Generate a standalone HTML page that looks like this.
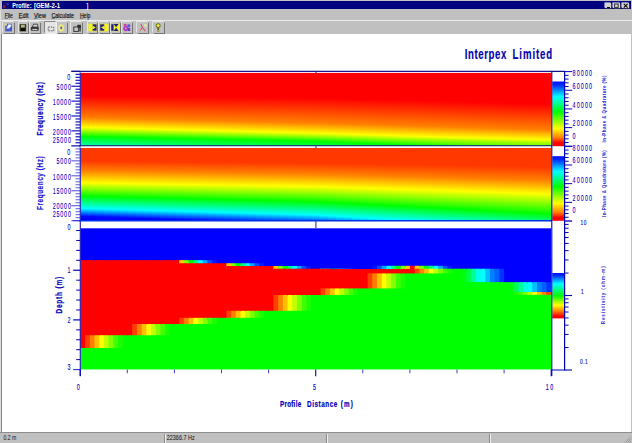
<!DOCTYPE html>
<html><head><meta charset="utf-8"><title>Profile: [GEM-2-1]</title>
<style>
html,body{margin:0;padding:0}
body{width:632px;height:443px;overflow:hidden;background:#c0c0c0;position:relative;font-family:"Liberation Sans",sans-serif}
.abs{position:absolute}
#title{left:1.9px;top:1.3px;width:628.8px;height:8.2px;background:#000080}
#content{left:2.2px;top:34px;width:628.5px;height:398.3px;background:#fff}
#lb{left:1.3px;top:34px;width:1px;height:399px;background:#868686}
#menuline1{left:0;top:19.5px;width:632px;height:.9px;background:#9a9a9a}
#menuline2{left:0;top:20.4px;width:632px;height:.8px;background:#ececec}
#sbtop{left:0;top:432.3px;width:632px;height:1px;background:#8e8e8e}
.tb{position:absolute;top:21.6px;height:11.2px;background:#c0c0c0;box-shadow:-.7px -.7px 0 #f4f4f4, .9px .9px 0 #6c6c6c}
.cap{position:absolute;top:2.6px;height:5.8px;background:#d0d0d0;box-shadow:-.5px -.5px 0 #fff,.6px .6px 0 #505050}
.sep{position:absolute;top:433.5px;width:1px;height:9px;background:#f0f0f0;box-shadow:-1px 0 0 #8a8a8a}
</style></head><body>
<div id="title" class="abs"></div>
<div class="cap" style="left:605.2px;width:6.3px"></div>
<div class="cap" style="left:613px;width:6.6px"></div>
<div class="cap" style="left:621.9px;width:7.4px"></div>
<div id="menuline1" class="abs"></div><div id="menuline2" class="abs"></div>
<div class="tb" style="left:3.2px;width:10.6px"></div>
<div class="tb" style="left:19px;width:9px"></div>
<div class="tb" style="left:29.6px;width:10.4px"></div>
<div class="tb" style="left:44.8px;width:11px;background:#e6e6e6;box-shadow:-.7px -.7px 0 #6c6c6c,.9px .9px 0 #f4f4f4"></div>
<div class="tb" style="left:56.6px;width:10.2px"></div>
<div class="tb" style="left:70.8px;width:11.4px"></div>
<div class="tb" style="left:87.8px;width:9.4px"></div>
<div class="tb" style="left:99.4px;width:9.2px"></div>
<div class="tb" style="left:110.8px;width:9.6px"></div>
<div class="tb" style="left:122.2px;width:9.8px"></div>
<div class="tb" style="left:137.4px;width:10.8px"></div>
<div class="tb" style="left:153px;width:10.8px"></div>
<div id="content" class="abs"></div>
<div id="lb" class="abs"></div><div class="abs" style="left:0;top:10px;width:1.2px;height:423px;background:#dedede"></div>
<div id="sbtop" class="abs"></div>
<div class="sep" style="left:164.5px"></div>
<div class="sep" style="left:327.3px"></div>
<div class="sep" style="left:490px"></div>
<svg width="632" height="443" viewBox="0 0 632 443" style="position:absolute;left:0;top:0" font-family="Liberation Sans, sans-serif"><defs><linearGradient id="a0" gradientUnits="userSpaceOnUse" x1="0" x2="0" y1="96.04" y2="149.70"><stop offset="0.0000" stop-color="#ff0000"/><stop offset="0.4019" stop-color="#ff8000"/><stop offset="0.5847" stop-color="#ffff00"/><stop offset="0.6535" stop-color="#99ff00"/><stop offset="0.7557" stop-color="#00ff00"/><stop offset="1.0000" stop-color="#00ffff"/></linearGradient><linearGradient id="a1" gradientUnits="userSpaceOnUse" x1="0" x2="0" y1="96.10" y2="150.05"><stop offset="0.0000" stop-color="#ff0000"/><stop offset="0.4020" stop-color="#ff8000"/><stop offset="0.5840" stop-color="#ffff00"/><stop offset="0.6523" stop-color="#99ff00"/><stop offset="0.7534" stop-color="#00ff00"/><stop offset="1.0000" stop-color="#00ffff"/></linearGradient><linearGradient id="a2" gradientUnits="userSpaceOnUse" x1="0" x2="0" y1="96.17" y2="150.41"><stop offset="0.0000" stop-color="#ff0000"/><stop offset="0.4020" stop-color="#ff8000"/><stop offset="0.5833" stop-color="#ffff00"/><stop offset="0.6511" stop-color="#99ff00"/><stop offset="0.7511" stop-color="#00ff00"/><stop offset="1.0000" stop-color="#00ffff"/></linearGradient><linearGradient id="a3" gradientUnits="userSpaceOnUse" x1="0" x2="0" y1="96.24" y2="150.76"><stop offset="0.0000" stop-color="#ff0000"/><stop offset="0.4021" stop-color="#ff8000"/><stop offset="0.5827" stop-color="#ffff00"/><stop offset="0.6499" stop-color="#99ff00"/><stop offset="0.7488" stop-color="#00ff00"/><stop offset="1.0000" stop-color="#00ffff"/></linearGradient><linearGradient id="a4" gradientUnits="userSpaceOnUse" x1="0" x2="0" y1="96.31" y2="151.12"><stop offset="0.0000" stop-color="#ff0000"/><stop offset="0.4021" stop-color="#ff8000"/><stop offset="0.5820" stop-color="#ffff00"/><stop offset="0.6487" stop-color="#99ff00"/><stop offset="0.7465" stop-color="#00ff00"/><stop offset="1.0000" stop-color="#00ffff"/></linearGradient><linearGradient id="a5" gradientUnits="userSpaceOnUse" x1="0" x2="0" y1="96.38" y2="151.47"><stop offset="0.0000" stop-color="#ff0000"/><stop offset="0.4022" stop-color="#ff8000"/><stop offset="0.5814" stop-color="#ffff00"/><stop offset="0.6475" stop-color="#99ff00"/><stop offset="0.7443" stop-color="#00ff00"/><stop offset="1.0000" stop-color="#00ffff"/></linearGradient><linearGradient id="a6" gradientUnits="userSpaceOnUse" x1="0" x2="0" y1="96.44" y2="151.83"><stop offset="0.0000" stop-color="#ff0000"/><stop offset="0.4022" stop-color="#ff8000"/><stop offset="0.5808" stop-color="#ffff00"/><stop offset="0.6464" stop-color="#99ff00"/><stop offset="0.7421" stop-color="#00ff00"/><stop offset="1.0000" stop-color="#00ffff"/></linearGradient><linearGradient id="a7" gradientUnits="userSpaceOnUse" x1="0" x2="0" y1="96.51" y2="152.18"><stop offset="0.0000" stop-color="#ff0000"/><stop offset="0.4023" stop-color="#ff8000"/><stop offset="0.5801" stop-color="#ffff00"/><stop offset="0.6452" stop-color="#99ff00"/><stop offset="0.7399" stop-color="#00ff00"/><stop offset="1.0000" stop-color="#00ffff"/></linearGradient><linearGradient id="a8" gradientUnits="userSpaceOnUse" x1="0" x2="0" y1="96.58" y2="152.54"><stop offset="0.0000" stop-color="#ff0000"/><stop offset="0.4023" stop-color="#ff8000"/><stop offset="0.5795" stop-color="#ffff00"/><stop offset="0.6441" stop-color="#99ff00"/><stop offset="0.7377" stop-color="#00ff00"/><stop offset="1.0000" stop-color="#00ffff"/></linearGradient><linearGradient id="a9" gradientUnits="userSpaceOnUse" x1="0" x2="0" y1="96.65" y2="152.89"><stop offset="0.0000" stop-color="#ff0000"/><stop offset="0.4024" stop-color="#ff8000"/><stop offset="0.5789" stop-color="#ffff00"/><stop offset="0.6429" stop-color="#99ff00"/><stop offset="0.7356" stop-color="#00ff00"/><stop offset="1.0000" stop-color="#00ffff"/></linearGradient><linearGradient id="a10" gradientUnits="userSpaceOnUse" x1="0" x2="0" y1="96.71" y2="153.25"><stop offset="0.0000" stop-color="#ff0000"/><stop offset="0.4024" stop-color="#ff8000"/><stop offset="0.5783" stop-color="#ffff00"/><stop offset="0.6418" stop-color="#99ff00"/><stop offset="0.7334" stop-color="#00ff00"/><stop offset="1.0000" stop-color="#00ffff"/></linearGradient><linearGradient id="a11" gradientUnits="userSpaceOnUse" x1="0" x2="0" y1="96.78" y2="153.60"><stop offset="0.0000" stop-color="#ff0000"/><stop offset="0.4024" stop-color="#ff8000"/><stop offset="0.5777" stop-color="#ffff00"/><stop offset="0.6407" stop-color="#99ff00"/><stop offset="0.7313" stop-color="#00ff00"/><stop offset="1.0000" stop-color="#00ffff"/></linearGradient><linearGradient id="a12" gradientUnits="userSpaceOnUse" x1="0" x2="0" y1="96.85" y2="153.96"><stop offset="0.0000" stop-color="#ff0000"/><stop offset="0.4025" stop-color="#ff8000"/><stop offset="0.5771" stop-color="#ffff00"/><stop offset="0.6396" stop-color="#99ff00"/><stop offset="0.7293" stop-color="#00ff00"/><stop offset="1.0000" stop-color="#00ffff"/></linearGradient><linearGradient id="a13" gradientUnits="userSpaceOnUse" x1="0" x2="0" y1="96.92" y2="154.31"><stop offset="0.0000" stop-color="#ff0000"/><stop offset="0.4025" stop-color="#ff8000"/><stop offset="0.5765" stop-color="#ffff00"/><stop offset="0.6386" stop-color="#99ff00"/><stop offset="0.7272" stop-color="#00ff00"/><stop offset="1.0000" stop-color="#00ffff"/></linearGradient><linearGradient id="a14" gradientUnits="userSpaceOnUse" x1="0" x2="0" y1="96.98" y2="154.67"><stop offset="0.0000" stop-color="#ff0000"/><stop offset="0.4026" stop-color="#ff8000"/><stop offset="0.5759" stop-color="#ffff00"/><stop offset="0.6375" stop-color="#99ff00"/><stop offset="0.7252" stop-color="#00ff00"/><stop offset="1.0000" stop-color="#00ffff"/></linearGradient><linearGradient id="a15" gradientUnits="userSpaceOnUse" x1="0" x2="0" y1="97.05" y2="155.02"><stop offset="0.0000" stop-color="#ff0000"/><stop offset="0.4026" stop-color="#ff8000"/><stop offset="0.5753" stop-color="#ffff00"/><stop offset="0.6364" stop-color="#99ff00"/><stop offset="0.7231" stop-color="#00ff00"/><stop offset="1.0000" stop-color="#00ffff"/></linearGradient><linearGradient id="a16" gradientUnits="userSpaceOnUse" x1="0" x2="0" y1="97.12" y2="155.38"><stop offset="0.0000" stop-color="#ff0000"/><stop offset="0.4027" stop-color="#ff8000"/><stop offset="0.5747" stop-color="#ffff00"/><stop offset="0.6354" stop-color="#99ff00"/><stop offset="0.7211" stop-color="#00ff00"/><stop offset="1.0000" stop-color="#00ffff"/></linearGradient><linearGradient id="a17" gradientUnits="userSpaceOnUse" x1="0" x2="0" y1="97.19" y2="155.73"><stop offset="0.0000" stop-color="#ff0000"/><stop offset="0.4027" stop-color="#ff8000"/><stop offset="0.5742" stop-color="#ffff00"/><stop offset="0.6343" stop-color="#99ff00"/><stop offset="0.7192" stop-color="#00ff00"/><stop offset="1.0000" stop-color="#00ffff"/></linearGradient><linearGradient id="a18" gradientUnits="userSpaceOnUse" x1="0" x2="0" y1="97.25" y2="156.09"><stop offset="0.0000" stop-color="#ff0000"/><stop offset="0.4028" stop-color="#ff8000"/><stop offset="0.5736" stop-color="#ffff00"/><stop offset="0.6333" stop-color="#99ff00"/><stop offset="0.7172" stop-color="#00ff00"/><stop offset="1.0000" stop-color="#00ffff"/></linearGradient><linearGradient id="a19" gradientUnits="userSpaceOnUse" x1="0" x2="0" y1="97.32" y2="156.44"><stop offset="0.0000" stop-color="#ff0000"/><stop offset="0.4028" stop-color="#ff8000"/><stop offset="0.5731" stop-color="#ffff00"/><stop offset="0.6323" stop-color="#99ff00"/><stop offset="0.7153" stop-color="#00ff00"/><stop offset="1.0000" stop-color="#00ffff"/></linearGradient><linearGradient id="a20" gradientUnits="userSpaceOnUse" x1="0" x2="0" y1="97.39" y2="156.80"><stop offset="0.0000" stop-color="#ff0000"/><stop offset="0.4029" stop-color="#ff8000"/><stop offset="0.5725" stop-color="#ffff00"/><stop offset="0.6313" stop-color="#99ff00"/><stop offset="0.7133" stop-color="#00ff00"/><stop offset="1.0000" stop-color="#00ffff"/></linearGradient><linearGradient id="a21" gradientUnits="userSpaceOnUse" x1="0" x2="0" y1="97.46" y2="157.15"><stop offset="0.0000" stop-color="#ff0000"/><stop offset="0.4029" stop-color="#ff8000"/><stop offset="0.5720" stop-color="#ffff00"/><stop offset="0.6303" stop-color="#99ff00"/><stop offset="0.7114" stop-color="#00ff00"/><stop offset="1.0000" stop-color="#00ffff"/></linearGradient><linearGradient id="a22" gradientUnits="userSpaceOnUse" x1="0" x2="0" y1="97.52" y2="157.51"><stop offset="0.0000" stop-color="#ff0000"/><stop offset="0.4029" stop-color="#ff8000"/><stop offset="0.5714" stop-color="#ffff00"/><stop offset="0.6293" stop-color="#99ff00"/><stop offset="0.7095" stop-color="#00ff00"/><stop offset="1.0000" stop-color="#00ffff"/></linearGradient><linearGradient id="a23" gradientUnits="userSpaceOnUse" x1="0" x2="0" y1="97.59" y2="157.86"><stop offset="0.0000" stop-color="#ff0000"/><stop offset="0.4030" stop-color="#ff8000"/><stop offset="0.5709" stop-color="#ffff00"/><stop offset="0.6283" stop-color="#99ff00"/><stop offset="0.7077" stop-color="#00ff00"/><stop offset="1.0000" stop-color="#00ffff"/></linearGradient><linearGradient id="a24" gradientUnits="userSpaceOnUse" x1="0" x2="0" y1="97.66" y2="158.22"><stop offset="0.0000" stop-color="#ff0000"/><stop offset="0.4030" stop-color="#ff8000"/><stop offset="0.5703" stop-color="#ffff00"/><stop offset="0.6273" stop-color="#99ff00"/><stop offset="0.7058" stop-color="#00ff00"/><stop offset="1.0000" stop-color="#00ffff"/></linearGradient><linearGradient id="a25" gradientUnits="userSpaceOnUse" x1="0" x2="0" y1="97.73" y2="158.57"><stop offset="0.0000" stop-color="#ff0000"/><stop offset="0.4031" stop-color="#ff8000"/><stop offset="0.5698" stop-color="#ffff00"/><stop offset="0.6264" stop-color="#99ff00"/><stop offset="0.7040" stop-color="#00ff00"/><stop offset="1.0000" stop-color="#00ffff"/></linearGradient><linearGradient id="a26" gradientUnits="userSpaceOnUse" x1="0" x2="0" y1="97.80" y2="158.93"><stop offset="0.0000" stop-color="#ff0000"/><stop offset="0.4031" stop-color="#ff8000"/><stop offset="0.5693" stop-color="#ffff00"/><stop offset="0.6254" stop-color="#99ff00"/><stop offset="0.7022" stop-color="#00ff00"/><stop offset="1.0000" stop-color="#00ffff"/></linearGradient><linearGradient id="a27" gradientUnits="userSpaceOnUse" x1="0" x2="0" y1="97.86" y2="159.28"><stop offset="0.0000" stop-color="#ff0000"/><stop offset="0.4031" stop-color="#ff8000"/><stop offset="0.5688" stop-color="#ffff00"/><stop offset="0.6245" stop-color="#99ff00"/><stop offset="0.7004" stop-color="#00ff00"/><stop offset="1.0000" stop-color="#00ffff"/></linearGradient><linearGradient id="a28" gradientUnits="userSpaceOnUse" x1="0" x2="0" y1="97.93" y2="159.64"><stop offset="0.0000" stop-color="#ff0000"/><stop offset="0.4032" stop-color="#ff8000"/><stop offset="0.5683" stop-color="#ffff00"/><stop offset="0.6235" stop-color="#99ff00"/><stop offset="0.6986" stop-color="#00ff00"/><stop offset="1.0000" stop-color="#00ffff"/></linearGradient><linearGradient id="a29" gradientUnits="userSpaceOnUse" x1="0" x2="0" y1="98.00" y2="159.99"><stop offset="0.0000" stop-color="#ff0000"/><stop offset="0.4032" stop-color="#ff8000"/><stop offset="0.5678" stop-color="#ffff00"/><stop offset="0.6226" stop-color="#99ff00"/><stop offset="0.6968" stop-color="#00ff00"/><stop offset="1.0000" stop-color="#00ffff"/></linearGradient><linearGradient id="a30" gradientUnits="userSpaceOnUse" x1="0" x2="0" y1="98.19" y2="160.65"><stop offset="0.0000" stop-color="#ff0000"/><stop offset="0.4008" stop-color="#ff8000"/><stop offset="0.5644" stop-color="#ffff00"/><stop offset="0.6188" stop-color="#99ff00"/><stop offset="0.6941" stop-color="#00ff00"/><stop offset="1.0000" stop-color="#00ffff"/></linearGradient><linearGradient id="a31" gradientUnits="userSpaceOnUse" x1="0" x2="0" y1="98.39" y2="161.31"><stop offset="0.0000" stop-color="#ff0000"/><stop offset="0.3984" stop-color="#ff8000"/><stop offset="0.5611" stop-color="#ffff00"/><stop offset="0.6149" stop-color="#99ff00"/><stop offset="0.6914" stop-color="#00ff00"/><stop offset="1.0000" stop-color="#00ffff"/></linearGradient><linearGradient id="a32" gradientUnits="userSpaceOnUse" x1="0" x2="0" y1="98.59" y2="161.98"><stop offset="0.0000" stop-color="#ff0000"/><stop offset="0.3960" stop-color="#ff8000"/><stop offset="0.5578" stop-color="#ffff00"/><stop offset="0.6112" stop-color="#99ff00"/><stop offset="0.6887" stop-color="#00ff00"/><stop offset="1.0000" stop-color="#00ffff"/></linearGradient><linearGradient id="a33" gradientUnits="userSpaceOnUse" x1="0" x2="0" y1="98.79" y2="162.64"><stop offset="0.0000" stop-color="#ff0000"/><stop offset="0.3936" stop-color="#ff8000"/><stop offset="0.5546" stop-color="#ffff00"/><stop offset="0.6074" stop-color="#99ff00"/><stop offset="0.6861" stop-color="#00ff00"/><stop offset="1.0000" stop-color="#00ffff"/></linearGradient><linearGradient id="a34" gradientUnits="userSpaceOnUse" x1="0" x2="0" y1="98.99" y2="163.31"><stop offset="0.0000" stop-color="#ff0000"/><stop offset="0.3913" stop-color="#ff8000"/><stop offset="0.5514" stop-color="#ffff00"/><stop offset="0.6038" stop-color="#99ff00"/><stop offset="0.6835" stop-color="#00ff00"/><stop offset="1.0000" stop-color="#00ffff"/></linearGradient><linearGradient id="a35" gradientUnits="userSpaceOnUse" x1="0" x2="0" y1="99.19" y2="163.97"><stop offset="0.0000" stop-color="#ff0000"/><stop offset="0.3890" stop-color="#ff8000"/><stop offset="0.5483" stop-color="#ffff00"/><stop offset="0.6001" stop-color="#99ff00"/><stop offset="0.6810" stop-color="#00ff00"/><stop offset="1.0000" stop-color="#00ffff"/></linearGradient><linearGradient id="a36" gradientUnits="userSpaceOnUse" x1="0" x2="0" y1="99.39" y2="164.64"><stop offset="0.0000" stop-color="#ff0000"/><stop offset="0.3867" stop-color="#ff8000"/><stop offset="0.5452" stop-color="#ffff00"/><stop offset="0.5966" stop-color="#99ff00"/><stop offset="0.6785" stop-color="#00ff00"/><stop offset="1.0000" stop-color="#00ffff"/></linearGradient><linearGradient id="a37" gradientUnits="userSpaceOnUse" x1="0" x2="0" y1="99.59" y2="165.30"><stop offset="0.0000" stop-color="#ff0000"/><stop offset="0.3845" stop-color="#ff8000"/><stop offset="0.5421" stop-color="#ffff00"/><stop offset="0.5931" stop-color="#99ff00"/><stop offset="0.6760" stop-color="#00ff00"/><stop offset="1.0000" stop-color="#00ffff"/></linearGradient><linearGradient id="a38" gradientUnits="userSpaceOnUse" x1="0" x2="0" y1="99.79" y2="165.97"><stop offset="0.0000" stop-color="#ff0000"/><stop offset="0.3823" stop-color="#ff8000"/><stop offset="0.5391" stop-color="#ffff00"/><stop offset="0.5896" stop-color="#99ff00"/><stop offset="0.6735" stop-color="#00ff00"/><stop offset="1.0000" stop-color="#00ffff"/></linearGradient><linearGradient id="a39" gradientUnits="userSpaceOnUse" x1="0" x2="0" y1="99.99" y2="166.63"><stop offset="0.0000" stop-color="#ff0000"/><stop offset="0.3801" stop-color="#ff8000"/><stop offset="0.5361" stop-color="#ffff00"/><stop offset="0.5862" stop-color="#99ff00"/><stop offset="0.6711" stop-color="#00ff00"/><stop offset="1.0000" stop-color="#00ffff"/></linearGradient><linearGradient id="a40" gradientUnits="userSpaceOnUse" x1="0" x2="0" y1="100.19" y2="167.30"><stop offset="0.0000" stop-color="#ff0000"/><stop offset="0.3780" stop-color="#ff8000"/><stop offset="0.5332" stop-color="#ffff00"/><stop offset="0.5828" stop-color="#99ff00"/><stop offset="0.6687" stop-color="#00ff00"/><stop offset="1.0000" stop-color="#00ffff"/></linearGradient><linearGradient id="a41" gradientUnits="userSpaceOnUse" x1="0" x2="0" y1="100.39" y2="167.96"><stop offset="0.0000" stop-color="#ff0000"/><stop offset="0.3759" stop-color="#ff8000"/><stop offset="0.5303" stop-color="#ffff00"/><stop offset="0.5795" stop-color="#99ff00"/><stop offset="0.6664" stop-color="#00ff00"/><stop offset="1.0000" stop-color="#00ffff"/></linearGradient><linearGradient id="a42" gradientUnits="userSpaceOnUse" x1="0" x2="0" y1="100.59" y2="168.63"><stop offset="0.0000" stop-color="#ff0000"/><stop offset="0.3738" stop-color="#ff8000"/><stop offset="0.5275" stop-color="#ffff00"/><stop offset="0.5762" stop-color="#99ff00"/><stop offset="0.6641" stop-color="#00ff00"/><stop offset="1.0000" stop-color="#00ffff"/></linearGradient><linearGradient id="a43" gradientUnits="userSpaceOnUse" x1="0" x2="0" y1="100.79" y2="169.29"><stop offset="0.0000" stop-color="#ff0000"/><stop offset="0.3717" stop-color="#ff8000"/><stop offset="0.5247" stop-color="#ffff00"/><stop offset="0.5730" stop-color="#99ff00"/><stop offset="0.6618" stop-color="#00ff00"/><stop offset="1.0000" stop-color="#00ffff"/></linearGradient><linearGradient id="a44" gradientUnits="userSpaceOnUse" x1="0" x2="0" y1="100.99" y2="169.96"><stop offset="0.0000" stop-color="#ff0000"/><stop offset="0.3697" stop-color="#ff8000"/><stop offset="0.5219" stop-color="#ffff00"/><stop offset="0.5698" stop-color="#99ff00"/><stop offset="0.6596" stop-color="#00ff00"/><stop offset="1.0000" stop-color="#00ffff"/></linearGradient><linearGradient id="a45" gradientUnits="userSpaceOnUse" x1="0" x2="0" y1="101.19" y2="170.65"><stop offset="0.0000" stop-color="#ff0000"/><stop offset="0.3676" stop-color="#ff8000"/><stop offset="0.5181" stop-color="#ffff00"/><stop offset="0.5660" stop-color="#99ff00"/><stop offset="0.6602" stop-color="#00ff00"/><stop offset="1.0000" stop-color="#00ffff"/></linearGradient><linearGradient id="a46" gradientUnits="userSpaceOnUse" x1="0" x2="0" y1="101.40" y2="171.34"><stop offset="0.0000" stop-color="#ff0000"/><stop offset="0.3656" stop-color="#ff8000"/><stop offset="0.5143" stop-color="#ffff00"/><stop offset="0.5623" stop-color="#99ff00"/><stop offset="0.6611" stop-color="#00ff00"/><stop offset="1.0000" stop-color="#00ffff"/></linearGradient><linearGradient id="a47" gradientUnits="userSpaceOnUse" x1="0" x2="0" y1="101.61" y2="172.04"><stop offset="0.0000" stop-color="#ff0000"/><stop offset="0.3635" stop-color="#ff8000"/><stop offset="0.5106" stop-color="#ffff00"/><stop offset="0.5586" stop-color="#99ff00"/><stop offset="0.6620" stop-color="#00ff00"/><stop offset="1.0000" stop-color="#00ffff"/></linearGradient><linearGradient id="a48" gradientUnits="userSpaceOnUse" x1="0" x2="0" y1="101.82" y2="172.73"><stop offset="0.0000" stop-color="#ff0000"/><stop offset="0.3615" stop-color="#ff8000"/><stop offset="0.5069" stop-color="#ffff00"/><stop offset="0.5550" stop-color="#99ff00"/><stop offset="0.6628" stop-color="#00ff00"/><stop offset="1.0000" stop-color="#00ffff"/></linearGradient><linearGradient id="a49" gradientUnits="userSpaceOnUse" x1="0" x2="0" y1="102.03" y2="173.43"><stop offset="0.0000" stop-color="#ff0000"/><stop offset="0.3596" stop-color="#ff8000"/><stop offset="0.5033" stop-color="#ffff00"/><stop offset="0.5514" stop-color="#99ff00"/><stop offset="0.6637" stop-color="#00ff00"/><stop offset="1.0000" stop-color="#00ffff"/></linearGradient><linearGradient id="a50" gradientUnits="userSpaceOnUse" x1="0" x2="0" y1="102.24" y2="174.12"><stop offset="0.0000" stop-color="#ff0000"/><stop offset="0.3576" stop-color="#ff8000"/><stop offset="0.4997" stop-color="#ffff00"/><stop offset="0.5479" stop-color="#99ff00"/><stop offset="0.6645" stop-color="#00ff00"/><stop offset="1.0000" stop-color="#00ffff"/></linearGradient><linearGradient id="a51" gradientUnits="userSpaceOnUse" x1="0" x2="0" y1="102.44" y2="174.81"><stop offset="0.0000" stop-color="#ff0000"/><stop offset="0.3557" stop-color="#ff8000"/><stop offset="0.4961" stop-color="#ffff00"/><stop offset="0.5444" stop-color="#99ff00"/><stop offset="0.6653" stop-color="#00ff00"/><stop offset="1.0000" stop-color="#00ffff"/></linearGradient><linearGradient id="a52" gradientUnits="userSpaceOnUse" x1="0" x2="0" y1="102.65" y2="175.51"><stop offset="0.0000" stop-color="#ff0000"/><stop offset="0.3538" stop-color="#ff8000"/><stop offset="0.4926" stop-color="#ffff00"/><stop offset="0.5409" stop-color="#99ff00"/><stop offset="0.6661" stop-color="#00ff00"/><stop offset="1.0000" stop-color="#00ffff"/></linearGradient><linearGradient id="a53" gradientUnits="userSpaceOnUse" x1="0" x2="0" y1="102.86" y2="176.20"><stop offset="0.0000" stop-color="#ff0000"/><stop offset="0.3519" stop-color="#ff8000"/><stop offset="0.4892" stop-color="#ffff00"/><stop offset="0.5375" stop-color="#99ff00"/><stop offset="0.6669" stop-color="#00ff00"/><stop offset="1.0000" stop-color="#00ffff"/></linearGradient><linearGradient id="a54" gradientUnits="userSpaceOnUse" x1="0" x2="0" y1="103.07" y2="176.89"><stop offset="0.0000" stop-color="#ff0000"/><stop offset="0.3501" stop-color="#ff8000"/><stop offset="0.4858" stop-color="#ffff00"/><stop offset="0.5342" stop-color="#99ff00"/><stop offset="0.6677" stop-color="#00ff00"/><stop offset="1.0000" stop-color="#00ffff"/></linearGradient><linearGradient id="a55" gradientUnits="userSpaceOnUse" x1="0" x2="0" y1="103.28" y2="177.59"><stop offset="0.0000" stop-color="#ff0000"/><stop offset="0.3483" stop-color="#ff8000"/><stop offset="0.4824" stop-color="#ffff00"/><stop offset="0.5309" stop-color="#99ff00"/><stop offset="0.6684" stop-color="#00ff00"/><stop offset="1.0000" stop-color="#00ffff"/></linearGradient><linearGradient id="a56" gradientUnits="userSpaceOnUse" x1="0" x2="0" y1="103.48" y2="178.28"><stop offset="0.0000" stop-color="#ff0000"/><stop offset="0.3465" stop-color="#ff8000"/><stop offset="0.4791" stop-color="#ffff00"/><stop offset="0.5276" stop-color="#99ff00"/><stop offset="0.6692" stop-color="#00ff00"/><stop offset="1.0000" stop-color="#00ffff"/></linearGradient><linearGradient id="a57" gradientUnits="userSpaceOnUse" x1="0" x2="0" y1="103.69" y2="178.98"><stop offset="0.0000" stop-color="#ff0000"/><stop offset="0.3447" stop-color="#ff8000"/><stop offset="0.4758" stop-color="#ffff00"/><stop offset="0.5244" stop-color="#99ff00"/><stop offset="0.6700" stop-color="#00ff00"/><stop offset="1.0000" stop-color="#00ffff"/></linearGradient><linearGradient id="a58" gradientUnits="userSpaceOnUse" x1="0" x2="0" y1="103.90" y2="179.67"><stop offset="0.0000" stop-color="#ff0000"/><stop offset="0.3429" stop-color="#ff8000"/><stop offset="0.4726" stop-color="#ffff00"/><stop offset="0.5212" stop-color="#99ff00"/><stop offset="0.6707" stop-color="#00ff00"/><stop offset="1.0000" stop-color="#00ffff"/></linearGradient><linearGradient id="b0" gradientUnits="userSpaceOnUse" x1="0" x2="0" y1="140.00" y2="230.19"><stop offset="0.0000" stop-color="#ff3800"/><stop offset="0.2333" stop-color="#ff3800"/><stop offset="0.3389" stop-color="#ff8000"/><stop offset="0.4754" stop-color="#ffff00"/><stop offset="0.6221" stop-color="#00ff00"/><stop offset="0.7598" stop-color="#00ffff"/><stop offset="0.8498" stop-color="#0000ff"/><stop offset="1.0000" stop-color="#0000ff"/></linearGradient><linearGradient id="b1" gradientUnits="userSpaceOnUse" x1="0" x2="0" y1="140.00" y2="230.52"><stop offset="0.0000" stop-color="#ff3800"/><stop offset="0.2331" stop-color="#ff3800"/><stop offset="0.3390" stop-color="#ff8000"/><stop offset="0.4750" stop-color="#ffff00"/><stop offset="0.6220" stop-color="#00ff00"/><stop offset="0.7594" stop-color="#00ffff"/><stop offset="0.8494" stop-color="#0000ff"/><stop offset="1.0000" stop-color="#0000ff"/></linearGradient><linearGradient id="b2" gradientUnits="userSpaceOnUse" x1="0" x2="0" y1="140.00" y2="230.86"><stop offset="0.0000" stop-color="#ff3800"/><stop offset="0.2330" stop-color="#ff3800"/><stop offset="0.3390" stop-color="#ff8000"/><stop offset="0.4746" stop-color="#ffff00"/><stop offset="0.6218" stop-color="#00ff00"/><stop offset="0.7591" stop-color="#00ffff"/><stop offset="0.8491" stop-color="#0000ff"/><stop offset="1.0000" stop-color="#0000ff"/></linearGradient><linearGradient id="b3" gradientUnits="userSpaceOnUse" x1="0" x2="0" y1="140.00" y2="231.20"><stop offset="0.0000" stop-color="#ff3800"/><stop offset="0.2329" stop-color="#ff3800"/><stop offset="0.3390" stop-color="#ff8000"/><stop offset="0.4743" stop-color="#ffff00"/><stop offset="0.6217" stop-color="#00ff00"/><stop offset="0.7587" stop-color="#00ffff"/><stop offset="0.8487" stop-color="#0000ff"/><stop offset="1.0000" stop-color="#0000ff"/></linearGradient><linearGradient id="b4" gradientUnits="userSpaceOnUse" x1="0" x2="0" y1="140.00" y2="231.54"><stop offset="0.0000" stop-color="#ff3800"/><stop offset="0.2328" stop-color="#ff3800"/><stop offset="0.3391" stop-color="#ff8000"/><stop offset="0.4739" stop-color="#ffff00"/><stop offset="0.6215" stop-color="#00ff00"/><stop offset="0.7583" stop-color="#00ffff"/><stop offset="0.8483" stop-color="#0000ff"/><stop offset="1.0000" stop-color="#0000ff"/></linearGradient><linearGradient id="b5" gradientUnits="userSpaceOnUse" x1="0" x2="0" y1="140.00" y2="231.88"><stop offset="0.0000" stop-color="#ff3800"/><stop offset="0.2327" stop-color="#ff3800"/><stop offset="0.3391" stop-color="#ff8000"/><stop offset="0.4736" stop-color="#ffff00"/><stop offset="0.6214" stop-color="#00ff00"/><stop offset="0.7580" stop-color="#00ffff"/><stop offset="0.8480" stop-color="#0000ff"/><stop offset="1.0000" stop-color="#0000ff"/></linearGradient><linearGradient id="b6" gradientUnits="userSpaceOnUse" x1="0" x2="0" y1="140.00" y2="232.21"><stop offset="0.0000" stop-color="#ff3800"/><stop offset="0.2325" stop-color="#ff3800"/><stop offset="0.3392" stop-color="#ff8000"/><stop offset="0.4733" stop-color="#ffff00"/><stop offset="0.6212" stop-color="#00ff00"/><stop offset="0.7576" stop-color="#00ffff"/><stop offset="0.8476" stop-color="#0000ff"/><stop offset="1.0000" stop-color="#0000ff"/></linearGradient><linearGradient id="b7" gradientUnits="userSpaceOnUse" x1="0" x2="0" y1="140.00" y2="232.55"><stop offset="0.0000" stop-color="#ff3800"/><stop offset="0.2324" stop-color="#ff3800"/><stop offset="0.3392" stop-color="#ff8000"/><stop offset="0.4729" stop-color="#ffff00"/><stop offset="0.6211" stop-color="#00ff00"/><stop offset="0.7572" stop-color="#00ffff"/><stop offset="0.8472" stop-color="#0000ff"/><stop offset="1.0000" stop-color="#0000ff"/></linearGradient><linearGradient id="b8" gradientUnits="userSpaceOnUse" x1="0" x2="0" y1="140.00" y2="232.89"><stop offset="0.0000" stop-color="#ff3800"/><stop offset="0.2323" stop-color="#ff3800"/><stop offset="0.3392" stop-color="#ff8000"/><stop offset="0.4726" stop-color="#ffff00"/><stop offset="0.6209" stop-color="#00ff00"/><stop offset="0.7569" stop-color="#00ffff"/><stop offset="0.8469" stop-color="#0000ff"/><stop offset="1.0000" stop-color="#0000ff"/></linearGradient><linearGradient id="b9" gradientUnits="userSpaceOnUse" x1="0" x2="0" y1="140.00" y2="233.23"><stop offset="0.0000" stop-color="#ff3800"/><stop offset="0.2322" stop-color="#ff3800"/><stop offset="0.3393" stop-color="#ff8000"/><stop offset="0.4722" stop-color="#ffff00"/><stop offset="0.6208" stop-color="#00ff00"/><stop offset="0.7565" stop-color="#00ffff"/><stop offset="0.8465" stop-color="#0000ff"/><stop offset="1.0000" stop-color="#0000ff"/></linearGradient><linearGradient id="b10" gradientUnits="userSpaceOnUse" x1="0" x2="0" y1="140.00" y2="233.57"><stop offset="0.0000" stop-color="#ff3800"/><stop offset="0.2321" stop-color="#ff3800"/><stop offset="0.3393" stop-color="#ff8000"/><stop offset="0.4719" stop-color="#ffff00"/><stop offset="0.6206" stop-color="#00ff00"/><stop offset="0.7562" stop-color="#00ffff"/><stop offset="0.8462" stop-color="#0000ff"/><stop offset="1.0000" stop-color="#0000ff"/></linearGradient><linearGradient id="b11" gradientUnits="userSpaceOnUse" x1="0" x2="0" y1="140.00" y2="233.91"><stop offset="0.0000" stop-color="#ff3800"/><stop offset="0.2319" stop-color="#ff3800"/><stop offset="0.3394" stop-color="#ff8000"/><stop offset="0.4716" stop-color="#ffff00"/><stop offset="0.6205" stop-color="#00ff00"/><stop offset="0.7558" stop-color="#00ffff"/><stop offset="0.8458" stop-color="#0000ff"/><stop offset="1.0000" stop-color="#0000ff"/></linearGradient><linearGradient id="b12" gradientUnits="userSpaceOnUse" x1="0" x2="0" y1="140.00" y2="234.24"><stop offset="0.0000" stop-color="#ff3800"/><stop offset="0.2318" stop-color="#ff3800"/><stop offset="0.3394" stop-color="#ff8000"/><stop offset="0.4713" stop-color="#ffff00"/><stop offset="0.6203" stop-color="#00ff00"/><stop offset="0.7555" stop-color="#00ffff"/><stop offset="0.8455" stop-color="#0000ff"/><stop offset="1.0000" stop-color="#0000ff"/></linearGradient><linearGradient id="b13" gradientUnits="userSpaceOnUse" x1="0" x2="0" y1="140.00" y2="234.58"><stop offset="0.0000" stop-color="#ff3800"/><stop offset="0.2317" stop-color="#ff3800"/><stop offset="0.3394" stop-color="#ff8000"/><stop offset="0.4709" stop-color="#ffff00"/><stop offset="0.6202" stop-color="#00ff00"/><stop offset="0.7552" stop-color="#00ffff"/><stop offset="0.8452" stop-color="#0000ff"/><stop offset="1.0000" stop-color="#0000ff"/></linearGradient><linearGradient id="b14" gradientUnits="userSpaceOnUse" x1="0" x2="0" y1="140.00" y2="234.92"><stop offset="0.0000" stop-color="#ff3800"/><stop offset="0.2316" stop-color="#ff3800"/><stop offset="0.3395" stop-color="#ff8000"/><stop offset="0.4706" stop-color="#ffff00"/><stop offset="0.6200" stop-color="#00ff00"/><stop offset="0.7548" stop-color="#00ffff"/><stop offset="0.8448" stop-color="#0000ff"/><stop offset="1.0000" stop-color="#0000ff"/></linearGradient><linearGradient id="b15" gradientUnits="userSpaceOnUse" x1="0" x2="0" y1="140.00" y2="235.26"><stop offset="0.0000" stop-color="#ff3800"/><stop offset="0.2315" stop-color="#ff3800"/><stop offset="0.3395" stop-color="#ff8000"/><stop offset="0.4703" stop-color="#ffff00"/><stop offset="0.6199" stop-color="#00ff00"/><stop offset="0.7545" stop-color="#00ffff"/><stop offset="0.8445" stop-color="#0000ff"/><stop offset="1.0000" stop-color="#0000ff"/></linearGradient><linearGradient id="b16" gradientUnits="userSpaceOnUse" x1="0" x2="0" y1="140.00" y2="235.60"><stop offset="0.0000" stop-color="#ff3800"/><stop offset="0.2314" stop-color="#ff3800"/><stop offset="0.3395" stop-color="#ff8000"/><stop offset="0.4700" stop-color="#ffff00"/><stop offset="0.6198" stop-color="#00ff00"/><stop offset="0.7541" stop-color="#00ffff"/><stop offset="0.8441" stop-color="#0000ff"/><stop offset="1.0000" stop-color="#0000ff"/></linearGradient><linearGradient id="b17" gradientUnits="userSpaceOnUse" x1="0" x2="0" y1="140.00" y2="235.93"><stop offset="0.0000" stop-color="#ff3800"/><stop offset="0.2313" stop-color="#ff3800"/><stop offset="0.3396" stop-color="#ff8000"/><stop offset="0.4696" stop-color="#ffff00"/><stop offset="0.6196" stop-color="#00ff00"/><stop offset="0.7538" stop-color="#00ffff"/><stop offset="0.8438" stop-color="#0000ff"/><stop offset="1.0000" stop-color="#0000ff"/></linearGradient><linearGradient id="b18" gradientUnits="userSpaceOnUse" x1="0" x2="0" y1="140.00" y2="236.27"><stop offset="0.0000" stop-color="#ff3800"/><stop offset="0.2312" stop-color="#ff3800"/><stop offset="0.3396" stop-color="#ff8000"/><stop offset="0.4693" stop-color="#ffff00"/><stop offset="0.6195" stop-color="#00ff00"/><stop offset="0.7535" stop-color="#00ffff"/><stop offset="0.8435" stop-color="#0000ff"/><stop offset="1.0000" stop-color="#0000ff"/></linearGradient><linearGradient id="b19" gradientUnits="userSpaceOnUse" x1="0" x2="0" y1="140.00" y2="236.61"><stop offset="0.0000" stop-color="#ff3800"/><stop offset="0.2311" stop-color="#ff3800"/><stop offset="0.3396" stop-color="#ff8000"/><stop offset="0.4690" stop-color="#ffff00"/><stop offset="0.6193" stop-color="#00ff00"/><stop offset="0.7532" stop-color="#00ffff"/><stop offset="0.8432" stop-color="#0000ff"/><stop offset="1.0000" stop-color="#0000ff"/></linearGradient><linearGradient id="b20" gradientUnits="userSpaceOnUse" x1="0" x2="0" y1="140.00" y2="236.95"><stop offset="0.0000" stop-color="#ff3800"/><stop offset="0.2309" stop-color="#ff3800"/><stop offset="0.3397" stop-color="#ff8000"/><stop offset="0.4687" stop-color="#ffff00"/><stop offset="0.6192" stop-color="#00ff00"/><stop offset="0.7528" stop-color="#00ffff"/><stop offset="0.8428" stop-color="#0000ff"/><stop offset="1.0000" stop-color="#0000ff"/></linearGradient><linearGradient id="b21" gradientUnits="userSpaceOnUse" x1="0" x2="0" y1="140.00" y2="237.29"><stop offset="0.0000" stop-color="#ff3800"/><stop offset="0.2308" stop-color="#ff3800"/><stop offset="0.3397" stop-color="#ff8000"/><stop offset="0.4684" stop-color="#ffff00"/><stop offset="0.6191" stop-color="#00ff00"/><stop offset="0.7525" stop-color="#00ffff"/><stop offset="0.8425" stop-color="#0000ff"/><stop offset="1.0000" stop-color="#0000ff"/></linearGradient><linearGradient id="b22" gradientUnits="userSpaceOnUse" x1="0" x2="0" y1="140.00" y2="237.62"><stop offset="0.0000" stop-color="#ff3800"/><stop offset="0.2307" stop-color="#ff3800"/><stop offset="0.3398" stop-color="#ff8000"/><stop offset="0.4681" stop-color="#ffff00"/><stop offset="0.6189" stop-color="#00ff00"/><stop offset="0.7522" stop-color="#00ffff"/><stop offset="0.8422" stop-color="#0000ff"/><stop offset="1.0000" stop-color="#0000ff"/></linearGradient><linearGradient id="b23" gradientUnits="userSpaceOnUse" x1="0" x2="0" y1="140.00" y2="237.96"><stop offset="0.0000" stop-color="#ff3800"/><stop offset="0.2306" stop-color="#ff3800"/><stop offset="0.3398" stop-color="#ff8000"/><stop offset="0.4678" stop-color="#ffff00"/><stop offset="0.6188" stop-color="#00ff00"/><stop offset="0.7519" stop-color="#00ffff"/><stop offset="0.8419" stop-color="#0000ff"/><stop offset="1.0000" stop-color="#0000ff"/></linearGradient><linearGradient id="b24" gradientUnits="userSpaceOnUse" x1="0" x2="0" y1="140.00" y2="238.30"><stop offset="0.0000" stop-color="#ff3800"/><stop offset="0.2305" stop-color="#ff3800"/><stop offset="0.3398" stop-color="#ff8000"/><stop offset="0.4675" stop-color="#ffff00"/><stop offset="0.6187" stop-color="#00ff00"/><stop offset="0.7516" stop-color="#00ffff"/><stop offset="0.8416" stop-color="#0000ff"/><stop offset="1.0000" stop-color="#0000ff"/></linearGradient><linearGradient id="b25" gradientUnits="userSpaceOnUse" x1="0" x2="0" y1="140.00" y2="238.64"><stop offset="0.0000" stop-color="#ff3800"/><stop offset="0.2304" stop-color="#ff3800"/><stop offset="0.3399" stop-color="#ff8000"/><stop offset="0.4672" stop-color="#ffff00"/><stop offset="0.6185" stop-color="#00ff00"/><stop offset="0.7512" stop-color="#00ffff"/><stop offset="0.8412" stop-color="#0000ff"/><stop offset="1.0000" stop-color="#0000ff"/></linearGradient><linearGradient id="b26" gradientUnits="userSpaceOnUse" x1="0" x2="0" y1="140.00" y2="238.98"><stop offset="0.0000" stop-color="#ff3800"/><stop offset="0.2303" stop-color="#ff3800"/><stop offset="0.3399" stop-color="#ff8000"/><stop offset="0.4669" stop-color="#ffff00"/><stop offset="0.6184" stop-color="#00ff00"/><stop offset="0.7509" stop-color="#00ffff"/><stop offset="0.8409" stop-color="#0000ff"/><stop offset="1.0000" stop-color="#0000ff"/></linearGradient><linearGradient id="b27" gradientUnits="userSpaceOnUse" x1="0" x2="0" y1="140.00" y2="239.32"><stop offset="0.0000" stop-color="#ff3800"/><stop offset="0.2302" stop-color="#ff3800"/><stop offset="0.3399" stop-color="#ff8000"/><stop offset="0.4666" stop-color="#ffff00"/><stop offset="0.6183" stop-color="#00ff00"/><stop offset="0.7506" stop-color="#00ffff"/><stop offset="0.8406" stop-color="#0000ff"/><stop offset="1.0000" stop-color="#0000ff"/></linearGradient><linearGradient id="b28" gradientUnits="userSpaceOnUse" x1="0" x2="0" y1="140.00" y2="239.65"><stop offset="0.0000" stop-color="#ff3800"/><stop offset="0.2301" stop-color="#ff3800"/><stop offset="0.3400" stop-color="#ff8000"/><stop offset="0.4663" stop-color="#ffff00"/><stop offset="0.6181" stop-color="#00ff00"/><stop offset="0.7503" stop-color="#00ffff"/><stop offset="0.8403" stop-color="#0000ff"/><stop offset="1.0000" stop-color="#0000ff"/></linearGradient><linearGradient id="b29" gradientUnits="userSpaceOnUse" x1="0" x2="0" y1="140.00" y2="239.99"><stop offset="0.0000" stop-color="#ff3800"/><stop offset="0.2300" stop-color="#ff3800"/><stop offset="0.3400" stop-color="#ff8000"/><stop offset="0.4660" stop-color="#ffff00"/><stop offset="0.6180" stop-color="#00ff00"/><stop offset="0.7500" stop-color="#00ffff"/><stop offset="0.8400" stop-color="#0000ff"/><stop offset="1.0000" stop-color="#0000ff"/></linearGradient><linearGradient id="b30" gradientUnits="userSpaceOnUse" x1="0" x2="0" y1="140.00" y2="240.33"><stop offset="0.0000" stop-color="#ff3800"/><stop offset="0.2306" stop-color="#ff3800"/><stop offset="0.3410" stop-color="#ff8000"/><stop offset="0.4669" stop-color="#ffff00"/><stop offset="0.6200" stop-color="#00ff00"/><stop offset="0.7521" stop-color="#00ffff"/><stop offset="0.8425" stop-color="#0000ff"/><stop offset="1.0000" stop-color="#0000ff"/></linearGradient><linearGradient id="b31" gradientUnits="userSpaceOnUse" x1="0" x2="0" y1="140.00" y2="240.67"><stop offset="0.0000" stop-color="#ff3800"/><stop offset="0.2311" stop-color="#ff3800"/><stop offset="0.3421" stop-color="#ff8000"/><stop offset="0.4678" stop-color="#ffff00"/><stop offset="0.6220" stop-color="#00ff00"/><stop offset="0.7543" stop-color="#00ffff"/><stop offset="0.8451" stop-color="#0000ff"/><stop offset="1.0000" stop-color="#0000ff"/></linearGradient><linearGradient id="b32" gradientUnits="userSpaceOnUse" x1="0" x2="0" y1="140.00" y2="241.01"><stop offset="0.0000" stop-color="#ff3800"/><stop offset="0.2317" stop-color="#ff3800"/><stop offset="0.3431" stop-color="#ff8000"/><stop offset="0.4687" stop-color="#ffff00"/><stop offset="0.6240" stop-color="#00ff00"/><stop offset="0.7565" stop-color="#00ffff"/><stop offset="0.8476" stop-color="#0000ff"/><stop offset="1.0000" stop-color="#0000ff"/></linearGradient><linearGradient id="b33" gradientUnits="userSpaceOnUse" x1="0" x2="0" y1="140.00" y2="241.35"><stop offset="0.0000" stop-color="#ff3800"/><stop offset="0.2323" stop-color="#ff3800"/><stop offset="0.3441" stop-color="#ff8000"/><stop offset="0.4696" stop-color="#ffff00"/><stop offset="0.6260" stop-color="#00ff00"/><stop offset="0.7587" stop-color="#00ffff"/><stop offset="0.8501" stop-color="#0000ff"/><stop offset="1.0000" stop-color="#0000ff"/></linearGradient><linearGradient id="b34" gradientUnits="userSpaceOnUse" x1="0" x2="0" y1="140.00" y2="241.69"><stop offset="0.0000" stop-color="#ff3800"/><stop offset="0.2328" stop-color="#ff3800"/><stop offset="0.3451" stop-color="#ff8000"/><stop offset="0.4706" stop-color="#ffff00"/><stop offset="0.6280" stop-color="#00ff00"/><stop offset="0.7608" stop-color="#00ffff"/><stop offset="0.8526" stop-color="#0000ff"/><stop offset="1.0000" stop-color="#0000ff"/></linearGradient><linearGradient id="b35" gradientUnits="userSpaceOnUse" x1="0" x2="0" y1="140.00" y2="242.03"><stop offset="0.0000" stop-color="#ff3800"/><stop offset="0.2334" stop-color="#ff3800"/><stop offset="0.3462" stop-color="#ff8000"/><stop offset="0.4714" stop-color="#ffff00"/><stop offset="0.6300" stop-color="#00ff00"/><stop offset="0.7629" stop-color="#00ffff"/><stop offset="0.8551" stop-color="#0000ff"/><stop offset="1.0000" stop-color="#0000ff"/></linearGradient><linearGradient id="b36" gradientUnits="userSpaceOnUse" x1="0" x2="0" y1="140.00" y2="242.37"><stop offset="0.0000" stop-color="#ff3800"/><stop offset="0.2339" stop-color="#ff3800"/><stop offset="0.3472" stop-color="#ff8000"/><stop offset="0.4723" stop-color="#ffff00"/><stop offset="0.6319" stop-color="#00ff00"/><stop offset="0.7650" stop-color="#00ffff"/><stop offset="0.8576" stop-color="#0000ff"/><stop offset="1.0000" stop-color="#0000ff"/></linearGradient><linearGradient id="b37" gradientUnits="userSpaceOnUse" x1="0" x2="0" y1="140.00" y2="242.71"><stop offset="0.0000" stop-color="#ff3800"/><stop offset="0.2345" stop-color="#ff3800"/><stop offset="0.3482" stop-color="#ff8000"/><stop offset="0.4732" stop-color="#ffff00"/><stop offset="0.6339" stop-color="#00ff00"/><stop offset="0.7671" stop-color="#00ffff"/><stop offset="0.8600" stop-color="#0000ff"/><stop offset="1.0000" stop-color="#0000ff"/></linearGradient><linearGradient id="b38" gradientUnits="userSpaceOnUse" x1="0" x2="0" y1="140.00" y2="243.05"><stop offset="0.0000" stop-color="#ff3800"/><stop offset="0.2350" stop-color="#ff3800"/><stop offset="0.3492" stop-color="#ff8000"/><stop offset="0.4741" stop-color="#ffff00"/><stop offset="0.6358" stop-color="#00ff00"/><stop offset="0.7692" stop-color="#00ffff"/><stop offset="0.8625" stop-color="#0000ff"/><stop offset="1.0000" stop-color="#0000ff"/></linearGradient><linearGradient id="b39" gradientUnits="userSpaceOnUse" x1="0" x2="0" y1="140.00" y2="243.39"><stop offset="0.0000" stop-color="#ff3800"/><stop offset="0.2356" stop-color="#ff3800"/><stop offset="0.3502" stop-color="#ff8000"/><stop offset="0.4750" stop-color="#ffff00"/><stop offset="0.6377" stop-color="#00ff00"/><stop offset="0.7713" stop-color="#00ffff"/><stop offset="0.8649" stop-color="#0000ff"/><stop offset="1.0000" stop-color="#0000ff"/></linearGradient><linearGradient id="b40" gradientUnits="userSpaceOnUse" x1="0" x2="0" y1="140.00" y2="243.73"><stop offset="0.0000" stop-color="#ff3800"/><stop offset="0.2361" stop-color="#ff3800"/><stop offset="0.3511" stop-color="#ff8000"/><stop offset="0.4758" stop-color="#ffff00"/><stop offset="0.6396" stop-color="#00ff00"/><stop offset="0.7734" stop-color="#00ffff"/><stop offset="0.8673" stop-color="#0000ff"/><stop offset="1.0000" stop-color="#0000ff"/></linearGradient><linearGradient id="b41" gradientUnits="userSpaceOnUse" x1="0" x2="0" y1="140.00" y2="244.07"><stop offset="0.0000" stop-color="#ff3800"/><stop offset="0.2366" stop-color="#ff3800"/><stop offset="0.3521" stop-color="#ff8000"/><stop offset="0.4767" stop-color="#ffff00"/><stop offset="0.6415" stop-color="#00ff00"/><stop offset="0.7754" stop-color="#00ffff"/><stop offset="0.8697" stop-color="#0000ff"/><stop offset="1.0000" stop-color="#0000ff"/></linearGradient><linearGradient id="b42" gradientUnits="userSpaceOnUse" x1="0" x2="0" y1="140.00" y2="244.41"><stop offset="0.0000" stop-color="#ff3800"/><stop offset="0.2372" stop-color="#ff3800"/><stop offset="0.3531" stop-color="#ff8000"/><stop offset="0.4776" stop-color="#ffff00"/><stop offset="0.6434" stop-color="#00ff00"/><stop offset="0.7774" stop-color="#00ffff"/><stop offset="0.8721" stop-color="#0000ff"/><stop offset="1.0000" stop-color="#0000ff"/></linearGradient><linearGradient id="b43" gradientUnits="userSpaceOnUse" x1="0" x2="0" y1="140.00" y2="244.75"><stop offset="0.0000" stop-color="#ff3800"/><stop offset="0.2377" stop-color="#ff3800"/><stop offset="0.3540" stop-color="#ff8000"/><stop offset="0.4784" stop-color="#ffff00"/><stop offset="0.6453" stop-color="#00ff00"/><stop offset="0.7794" stop-color="#00ffff"/><stop offset="0.8744" stop-color="#0000ff"/><stop offset="1.0000" stop-color="#0000ff"/></linearGradient><linearGradient id="b44" gradientUnits="userSpaceOnUse" x1="0" x2="0" y1="140.00" y2="245.08"><stop offset="0.0000" stop-color="#ff3800"/><stop offset="0.2382" stop-color="#ff3800"/><stop offset="0.3550" stop-color="#ff8000"/><stop offset="0.4793" stop-color="#ffff00"/><stop offset="0.6471" stop-color="#00ff00"/><stop offset="0.7815" stop-color="#00ffff"/><stop offset="0.8768" stop-color="#0000ff"/><stop offset="1.0000" stop-color="#0000ff"/></linearGradient><linearGradient id="b45" gradientUnits="userSpaceOnUse" x1="0" x2="0" y1="140.00" y2="245.42"><stop offset="0.0000" stop-color="#ff3800"/><stop offset="0.2387" stop-color="#ff3800"/><stop offset="0.3560" stop-color="#ff8000"/><stop offset="0.4801" stop-color="#ffff00"/><stop offset="0.6490" stop-color="#00ff00"/><stop offset="0.7834" stop-color="#00ffff"/><stop offset="0.8791" stop-color="#0000ff"/><stop offset="1.0000" stop-color="#0000ff"/></linearGradient><linearGradient id="b46" gradientUnits="userSpaceOnUse" x1="0" x2="0" y1="140.00" y2="245.76"><stop offset="0.0000" stop-color="#ff3800"/><stop offset="0.2393" stop-color="#ff3800"/><stop offset="0.3569" stop-color="#ff8000"/><stop offset="0.4809" stop-color="#ffff00"/><stop offset="0.6508" stop-color="#00ff00"/><stop offset="0.7854" stop-color="#00ffff"/><stop offset="0.8814" stop-color="#0000ff"/><stop offset="1.0000" stop-color="#0000ff"/></linearGradient><linearGradient id="b47" gradientUnits="userSpaceOnUse" x1="0" x2="0" y1="140.00" y2="246.10"><stop offset="0.0000" stop-color="#ff3800"/><stop offset="0.2398" stop-color="#ff3800"/><stop offset="0.3578" stop-color="#ff8000"/><stop offset="0.4818" stop-color="#ffff00"/><stop offset="0.6526" stop-color="#00ff00"/><stop offset="0.7874" stop-color="#00ffff"/><stop offset="0.8837" stop-color="#0000ff"/><stop offset="1.0000" stop-color="#0000ff"/></linearGradient><linearGradient id="b48" gradientUnits="userSpaceOnUse" x1="0" x2="0" y1="140.00" y2="246.44"><stop offset="0.0000" stop-color="#ff3800"/><stop offset="0.2403" stop-color="#ff3800"/><stop offset="0.3588" stop-color="#ff8000"/><stop offset="0.4826" stop-color="#ffff00"/><stop offset="0.6544" stop-color="#00ff00"/><stop offset="0.7893" stop-color="#00ffff"/><stop offset="0.8860" stop-color="#0000ff"/><stop offset="1.0000" stop-color="#0000ff"/></linearGradient><linearGradient id="b49" gradientUnits="userSpaceOnUse" x1="0" x2="0" y1="140.00" y2="246.78"><stop offset="0.0000" stop-color="#ff3800"/><stop offset="0.2408" stop-color="#ff3800"/><stop offset="0.3597" stop-color="#ff8000"/><stop offset="0.4834" stop-color="#ffff00"/><stop offset="0.6562" stop-color="#00ff00"/><stop offset="0.7913" stop-color="#00ffff"/><stop offset="0.8883" stop-color="#0000ff"/><stop offset="1.0000" stop-color="#0000ff"/></linearGradient><linearGradient id="b50" gradientUnits="userSpaceOnUse" x1="0" x2="0" y1="140.00" y2="247.12"><stop offset="0.0000" stop-color="#ff3800"/><stop offset="0.2413" stop-color="#ff3800"/><stop offset="0.3606" stop-color="#ff8000"/><stop offset="0.4842" stop-color="#ffff00"/><stop offset="0.6580" stop-color="#00ff00"/><stop offset="0.7932" stop-color="#00ffff"/><stop offset="0.8905" stop-color="#0000ff"/><stop offset="1.0000" stop-color="#0000ff"/></linearGradient><linearGradient id="b51" gradientUnits="userSpaceOnUse" x1="0" x2="0" y1="140.00" y2="247.46"><stop offset="0.0000" stop-color="#ff3800"/><stop offset="0.2418" stop-color="#ff3800"/><stop offset="0.3615" stop-color="#ff8000"/><stop offset="0.4850" stop-color="#ffff00"/><stop offset="0.6598" stop-color="#00ff00"/><stop offset="0.7951" stop-color="#00ffff"/><stop offset="0.8928" stop-color="#0000ff"/><stop offset="1.0000" stop-color="#0000ff"/></linearGradient><linearGradient id="b52" gradientUnits="userSpaceOnUse" x1="0" x2="0" y1="140.00" y2="247.80"><stop offset="0.0000" stop-color="#ff3800"/><stop offset="0.2423" stop-color="#ff3800"/><stop offset="0.3624" stop-color="#ff8000"/><stop offset="0.4858" stop-color="#ffff00"/><stop offset="0.6616" stop-color="#00ff00"/><stop offset="0.7970" stop-color="#00ffff"/><stop offset="0.8950" stop-color="#0000ff"/><stop offset="1.0000" stop-color="#0000ff"/></linearGradient><linearGradient id="b53" gradientUnits="userSpaceOnUse" x1="0" x2="0" y1="140.00" y2="248.14"><stop offset="0.0000" stop-color="#ff3800"/><stop offset="0.2428" stop-color="#ff3800"/><stop offset="0.3633" stop-color="#ff8000"/><stop offset="0.4866" stop-color="#ffff00"/><stop offset="0.6633" stop-color="#00ff00"/><stop offset="0.7989" stop-color="#00ffff"/><stop offset="0.8972" stop-color="#0000ff"/><stop offset="1.0000" stop-color="#0000ff"/></linearGradient><linearGradient id="b54" gradientUnits="userSpaceOnUse" x1="0" x2="0" y1="140.00" y2="248.48"><stop offset="0.0000" stop-color="#ff3800"/><stop offset="0.2433" stop-color="#ff3800"/><stop offset="0.3642" stop-color="#ff8000"/><stop offset="0.4874" stop-color="#ffff00"/><stop offset="0.6651" stop-color="#00ff00"/><stop offset="0.8008" stop-color="#00ffff"/><stop offset="0.8994" stop-color="#0000ff"/><stop offset="1.0000" stop-color="#0000ff"/></linearGradient><linearGradient id="b55" gradientUnits="userSpaceOnUse" x1="0" x2="0" y1="140.00" y2="248.82"><stop offset="0.0000" stop-color="#ff3800"/><stop offset="0.2438" stop-color="#ff3800"/><stop offset="0.3651" stop-color="#ff8000"/><stop offset="0.4882" stop-color="#ffff00"/><stop offset="0.6668" stop-color="#00ff00"/><stop offset="0.8027" stop-color="#00ffff"/><stop offset="0.9016" stop-color="#0000ff"/><stop offset="1.0000" stop-color="#0000ff"/></linearGradient><linearGradient id="b56" gradientUnits="userSpaceOnUse" x1="0" x2="0" y1="140.00" y2="249.16"><stop offset="0.0000" stop-color="#ff3800"/><stop offset="0.2443" stop-color="#ff3800"/><stop offset="0.3660" stop-color="#ff8000"/><stop offset="0.4890" stop-color="#ffff00"/><stop offset="0.6685" stop-color="#00ff00"/><stop offset="0.8045" stop-color="#00ffff"/><stop offset="0.9038" stop-color="#0000ff"/><stop offset="1.0000" stop-color="#0000ff"/></linearGradient><linearGradient id="b57" gradientUnits="userSpaceOnUse" x1="0" x2="0" y1="140.00" y2="249.50"><stop offset="0.0000" stop-color="#ff3800"/><stop offset="0.2447" stop-color="#ff3800"/><stop offset="0.3669" stop-color="#ff8000"/><stop offset="0.4898" stop-color="#ffff00"/><stop offset="0.6702" stop-color="#00ff00"/><stop offset="0.8064" stop-color="#00ffff"/><stop offset="0.9059" stop-color="#0000ff"/><stop offset="1.0000" stop-color="#0000ff"/></linearGradient><linearGradient id="b58" gradientUnits="userSpaceOnUse" x1="0" x2="0" y1="140.00" y2="249.84"><stop offset="0.0000" stop-color="#ff3800"/><stop offset="0.2452" stop-color="#ff3800"/><stop offset="0.3678" stop-color="#ff8000"/><stop offset="0.4905" stop-color="#ffff00"/><stop offset="0.6719" stop-color="#00ff00"/><stop offset="0.8082" stop-color="#00ffff"/><stop offset="0.9081" stop-color="#0000ff"/><stop offset="1.0000" stop-color="#0000ff"/></linearGradient><linearGradient id="cb1" gradientUnits="userSpaceOnUse" x1="0" x2="0" y1="81.5" y2="146">
<stop offset="0" stop-color="#0010ff"/><stop offset="0.05" stop-color="#0028ff"/><stop offset="0.237" stop-color="#00ffff"/><stop offset="0.47" stop-color="#00ff00"/><stop offset="0.73" stop-color="#ffff00"/><stop offset="0.87" stop-color="#ff8000"/><stop offset="0.95" stop-color="#ff0000"/><stop offset="1" stop-color="#ff0000"/></linearGradient>
<linearGradient id="cb2" gradientUnits="userSpaceOnUse" x1="0" x2="0" y1="156.2" y2="220.7">
<stop offset="0" stop-color="#0010ff"/><stop offset="0.05" stop-color="#0028ff"/><stop offset="0.237" stop-color="#00ffff"/><stop offset="0.47" stop-color="#00ff00"/><stop offset="0.73" stop-color="#ffff00"/><stop offset="0.87" stop-color="#ff8000"/><stop offset="0.95" stop-color="#ff0000"/><stop offset="1" stop-color="#ff0000"/></linearGradient>
<linearGradient id="cb3" gradientUnits="userSpaceOnUse" x1="0" x2="0" y1="273" y2="318.4">
<stop offset="0" stop-color="#0010ff"/><stop offset="0.05" stop-color="#0028ff"/><stop offset="0.24" stop-color="#00ffff"/><stop offset="0.5" stop-color="#00ff00"/><stop offset="0.71" stop-color="#ffff00"/><stop offset="0.84" stop-color="#ff8000"/><stop offset="0.95" stop-color="#ff0000"/><stop offset="1" stop-color="#ff0000"/></linearGradient><clipPath id="cp"><rect x="80.40" y="72" width="470.80" height="297.7"/></clipPath></defs><g clip-path="url(#cp)"><rect x="80.40" y="72.80" width="9.28" height="72.80" fill="url(#a0)"/><rect x="88.38" y="72.80" width="9.28" height="72.80" fill="url(#a1)"/><rect x="96.36" y="72.80" width="9.28" height="72.80" fill="url(#a2)"/><rect x="104.34" y="72.80" width="9.28" height="72.80" fill="url(#a3)"/><rect x="112.32" y="72.80" width="9.28" height="72.80" fill="url(#a4)"/><rect x="120.30" y="72.80" width="9.28" height="72.80" fill="url(#a5)"/><rect x="128.28" y="72.80" width="9.28" height="72.80" fill="url(#a6)"/><rect x="136.26" y="72.80" width="9.28" height="72.80" fill="url(#a7)"/><rect x="144.24" y="72.80" width="9.28" height="72.80" fill="url(#a8)"/><rect x="152.22" y="72.80" width="9.28" height="72.80" fill="url(#a9)"/><rect x="160.20" y="72.80" width="9.28" height="72.80" fill="url(#a10)"/><rect x="168.18" y="72.80" width="9.28" height="72.80" fill="url(#a11)"/><rect x="176.16" y="72.80" width="9.28" height="72.80" fill="url(#a12)"/><rect x="184.14" y="72.80" width="9.28" height="72.80" fill="url(#a13)"/><rect x="192.12" y="72.80" width="9.28" height="72.80" fill="url(#a14)"/><rect x="200.09" y="72.80" width="9.28" height="72.80" fill="url(#a15)"/><rect x="208.07" y="72.80" width="9.28" height="72.80" fill="url(#a16)"/><rect x="216.05" y="72.80" width="9.28" height="72.80" fill="url(#a17)"/><rect x="224.03" y="72.80" width="9.28" height="72.80" fill="url(#a18)"/><rect x="232.01" y="72.80" width="9.28" height="72.80" fill="url(#a19)"/><rect x="239.99" y="72.80" width="9.28" height="72.80" fill="url(#a20)"/><rect x="247.97" y="72.80" width="9.28" height="72.80" fill="url(#a21)"/><rect x="255.95" y="72.80" width="9.28" height="72.80" fill="url(#a22)"/><rect x="263.93" y="72.80" width="9.28" height="72.80" fill="url(#a23)"/><rect x="271.91" y="72.80" width="9.28" height="72.80" fill="url(#a24)"/><rect x="279.89" y="72.80" width="9.28" height="72.80" fill="url(#a25)"/><rect x="287.87" y="72.80" width="9.28" height="72.80" fill="url(#a26)"/><rect x="295.85" y="72.80" width="9.28" height="72.80" fill="url(#a27)"/><rect x="303.83" y="72.80" width="9.28" height="72.80" fill="url(#a28)"/><rect x="311.81" y="72.80" width="9.28" height="72.80" fill="url(#a29)"/><rect x="319.79" y="72.80" width="9.28" height="72.80" fill="url(#a30)"/><rect x="327.77" y="72.80" width="9.28" height="72.80" fill="url(#a31)"/><rect x="335.75" y="72.80" width="9.28" height="72.80" fill="url(#a32)"/><rect x="343.73" y="72.80" width="9.28" height="72.80" fill="url(#a33)"/><rect x="351.71" y="72.80" width="9.28" height="72.80" fill="url(#a34)"/><rect x="359.69" y="72.80" width="9.28" height="72.80" fill="url(#a35)"/><rect x="367.67" y="72.80" width="9.28" height="72.80" fill="url(#a36)"/><rect x="375.65" y="72.80" width="9.28" height="72.80" fill="url(#a37)"/><rect x="383.63" y="72.80" width="9.28" height="72.80" fill="url(#a38)"/><rect x="391.61" y="72.80" width="9.28" height="72.80" fill="url(#a39)"/><rect x="399.59" y="72.80" width="9.28" height="72.80" fill="url(#a40)"/><rect x="407.57" y="72.80" width="9.28" height="72.80" fill="url(#a41)"/><rect x="415.55" y="72.80" width="9.28" height="72.80" fill="url(#a42)"/><rect x="423.53" y="72.80" width="9.28" height="72.80" fill="url(#a43)"/><rect x="431.51" y="72.80" width="9.28" height="72.80" fill="url(#a44)"/><rect x="439.48" y="72.80" width="9.28" height="72.80" fill="url(#a45)"/><rect x="447.46" y="72.80" width="9.28" height="72.80" fill="url(#a46)"/><rect x="455.44" y="72.80" width="9.28" height="72.80" fill="url(#a47)"/><rect x="463.42" y="72.80" width="9.28" height="72.80" fill="url(#a48)"/><rect x="471.40" y="72.80" width="9.28" height="72.80" fill="url(#a49)"/><rect x="479.38" y="72.80" width="9.28" height="72.80" fill="url(#a50)"/><rect x="487.36" y="72.80" width="9.28" height="72.80" fill="url(#a51)"/><rect x="495.34" y="72.80" width="9.28" height="72.80" fill="url(#a52)"/><rect x="503.32" y="72.80" width="9.28" height="72.80" fill="url(#a53)"/><rect x="511.30" y="72.80" width="9.28" height="72.80" fill="url(#a54)"/><rect x="519.28" y="72.80" width="9.28" height="72.80" fill="url(#a55)"/><rect x="527.26" y="72.80" width="9.28" height="72.80" fill="url(#a56)"/><rect x="535.24" y="72.80" width="9.28" height="72.80" fill="url(#a57)"/><rect x="543.22" y="72.80" width="9.28" height="72.80" fill="url(#a58)"/><rect x="80.40" y="147.90" width="9.28" height="72.70" fill="url(#b0)"/><rect x="88.38" y="147.90" width="9.28" height="72.70" fill="url(#b1)"/><rect x="96.36" y="147.90" width="9.28" height="72.70" fill="url(#b2)"/><rect x="104.34" y="147.90" width="9.28" height="72.70" fill="url(#b3)"/><rect x="112.32" y="147.90" width="9.28" height="72.70" fill="url(#b4)"/><rect x="120.30" y="147.90" width="9.28" height="72.70" fill="url(#b5)"/><rect x="128.28" y="147.90" width="9.28" height="72.70" fill="url(#b6)"/><rect x="136.26" y="147.90" width="9.28" height="72.70" fill="url(#b7)"/><rect x="144.24" y="147.90" width="9.28" height="72.70" fill="url(#b8)"/><rect x="152.22" y="147.90" width="9.28" height="72.70" fill="url(#b9)"/><rect x="160.20" y="147.90" width="9.28" height="72.70" fill="url(#b10)"/><rect x="168.18" y="147.90" width="9.28" height="72.70" fill="url(#b11)"/><rect x="176.16" y="147.90" width="9.28" height="72.70" fill="url(#b12)"/><rect x="184.14" y="147.90" width="9.28" height="72.70" fill="url(#b13)"/><rect x="192.12" y="147.90" width="9.28" height="72.70" fill="url(#b14)"/><rect x="200.09" y="147.90" width="9.28" height="72.70" fill="url(#b15)"/><rect x="208.07" y="147.90" width="9.28" height="72.70" fill="url(#b16)"/><rect x="216.05" y="147.90" width="9.28" height="72.70" fill="url(#b17)"/><rect x="224.03" y="147.90" width="9.28" height="72.70" fill="url(#b18)"/><rect x="232.01" y="147.90" width="9.28" height="72.70" fill="url(#b19)"/><rect x="239.99" y="147.90" width="9.28" height="72.70" fill="url(#b20)"/><rect x="247.97" y="147.90" width="9.28" height="72.70" fill="url(#b21)"/><rect x="255.95" y="147.90" width="9.28" height="72.70" fill="url(#b22)"/><rect x="263.93" y="147.90" width="9.28" height="72.70" fill="url(#b23)"/><rect x="271.91" y="147.90" width="9.28" height="72.70" fill="url(#b24)"/><rect x="279.89" y="147.90" width="9.28" height="72.70" fill="url(#b25)"/><rect x="287.87" y="147.90" width="9.28" height="72.70" fill="url(#b26)"/><rect x="295.85" y="147.90" width="9.28" height="72.70" fill="url(#b27)"/><rect x="303.83" y="147.90" width="9.28" height="72.70" fill="url(#b28)"/><rect x="311.81" y="147.90" width="9.28" height="72.70" fill="url(#b29)"/><rect x="319.79" y="147.90" width="9.28" height="72.70" fill="url(#b30)"/><rect x="327.77" y="147.90" width="9.28" height="72.70" fill="url(#b31)"/><rect x="335.75" y="147.90" width="9.28" height="72.70" fill="url(#b32)"/><rect x="343.73" y="147.90" width="9.28" height="72.70" fill="url(#b33)"/><rect x="351.71" y="147.90" width="9.28" height="72.70" fill="url(#b34)"/><rect x="359.69" y="147.90" width="9.28" height="72.70" fill="url(#b35)"/><rect x="367.67" y="147.90" width="9.28" height="72.70" fill="url(#b36)"/><rect x="375.65" y="147.90" width="9.28" height="72.70" fill="url(#b37)"/><rect x="383.63" y="147.90" width="9.28" height="72.70" fill="url(#b38)"/><rect x="391.61" y="147.90" width="9.28" height="72.70" fill="url(#b39)"/><rect x="399.59" y="147.90" width="9.28" height="72.70" fill="url(#b40)"/><rect x="407.57" y="147.90" width="9.28" height="72.70" fill="url(#b41)"/><rect x="415.55" y="147.90" width="9.28" height="72.70" fill="url(#b42)"/><rect x="423.53" y="147.90" width="9.28" height="72.70" fill="url(#b43)"/><rect x="431.51" y="147.90" width="9.28" height="72.70" fill="url(#b44)"/><rect x="439.48" y="147.90" width="9.28" height="72.70" fill="url(#b45)"/><rect x="447.46" y="147.90" width="9.28" height="72.70" fill="url(#b46)"/><rect x="455.44" y="147.90" width="9.28" height="72.70" fill="url(#b47)"/><rect x="463.42" y="147.90" width="9.28" height="72.70" fill="url(#b48)"/><rect x="471.40" y="147.90" width="9.28" height="72.70" fill="url(#b49)"/><rect x="479.38" y="147.90" width="9.28" height="72.70" fill="url(#b50)"/><rect x="487.36" y="147.90" width="9.28" height="72.70" fill="url(#b51)"/><rect x="495.34" y="147.90" width="9.28" height="72.70" fill="url(#b52)"/><rect x="503.32" y="147.90" width="9.28" height="72.70" fill="url(#b53)"/><rect x="511.30" y="147.90" width="9.28" height="72.70" fill="url(#b54)"/><rect x="519.28" y="147.90" width="9.28" height="72.70" fill="url(#b55)"/><rect x="527.26" y="147.90" width="9.28" height="72.70" fill="url(#b56)"/><rect x="535.24" y="147.90" width="9.28" height="72.70" fill="url(#b57)"/><rect x="543.22" y="147.90" width="9.28" height="72.70" fill="url(#b58)"/><rect x="80" y="220.6" width="472" height="8" fill="#fff"/><rect x="80.40" y="228.30" width="470.80" height="29.70" fill="#0000ff"/><rect x="80.40" y="340.00" width="470.80" height="29.60" fill="#00ff00"/><rect x="80.40" y="258.00" width="6.01" height="3.30" fill="#0000ff"/><rect x="80.40" y="260.10" width="6.01" height="76.30" fill="#ff0000"/><rect x="80.40" y="335.20" width="6.01" height="6.00" fill="#ff0000"/><rect x="80.40" y="340.00" width="6.01" height="8.00" fill="#ff0000"/><rect x="85.11" y="258.00" width="6.01" height="3.30" fill="#0000ff"/><rect x="85.11" y="260.10" width="6.01" height="76.30" fill="#ff0000"/><rect x="85.11" y="335.20" width="6.01" height="6.00" fill="#ff4000"/><rect x="85.11" y="340.00" width="6.01" height="8.00" fill="#ff4000"/><rect x="89.82" y="258.00" width="6.01" height="3.30" fill="#0000ff"/><rect x="89.82" y="260.10" width="6.01" height="76.30" fill="#ff0000"/><rect x="89.82" y="335.20" width="6.01" height="6.00" fill="#ff8000"/><rect x="89.82" y="340.00" width="6.01" height="8.00" fill="#ff8000"/><rect x="94.52" y="258.00" width="6.01" height="3.30" fill="#0000ff"/><rect x="94.52" y="260.10" width="6.01" height="76.30" fill="#ff0000"/><rect x="94.52" y="335.20" width="6.01" height="6.00" fill="#ffbf00"/><rect x="94.52" y="340.00" width="6.01" height="8.00" fill="#ffbf00"/><rect x="99.23" y="258.00" width="6.01" height="3.30" fill="#0000ff"/><rect x="99.23" y="260.10" width="6.01" height="76.30" fill="#ff0000"/><rect x="99.23" y="335.20" width="6.01" height="6.00" fill="#ffff00"/><rect x="99.23" y="340.00" width="6.01" height="8.00" fill="#ffff00"/><rect x="103.94" y="258.00" width="6.01" height="3.30" fill="#0000ff"/><rect x="103.94" y="260.10" width="6.01" height="76.30" fill="#ff0000"/><rect x="103.94" y="335.20" width="6.01" height="6.00" fill="#bfff00"/><rect x="103.94" y="340.00" width="6.01" height="8.00" fill="#bfff00"/><rect x="108.65" y="258.00" width="6.01" height="3.30" fill="#0000ff"/><rect x="108.65" y="260.10" width="6.01" height="76.30" fill="#ff0000"/><rect x="108.65" y="335.20" width="6.01" height="6.00" fill="#80ff00"/><rect x="108.65" y="340.00" width="6.01" height="8.00" fill="#80ff00"/><rect x="113.36" y="258.00" width="6.01" height="3.30" fill="#0000ff"/><rect x="113.36" y="260.10" width="6.01" height="76.30" fill="#ff0000"/><rect x="113.36" y="335.20" width="6.01" height="6.00" fill="#40ff00"/><rect x="113.36" y="340.00" width="6.01" height="8.00" fill="#40ff00"/><rect x="118.06" y="258.00" width="6.01" height="3.30" fill="#0000ff"/><rect x="118.06" y="260.10" width="6.01" height="76.30" fill="#ff0000"/><rect x="118.06" y="335.20" width="6.01" height="6.00" fill="#1aff00"/><rect x="118.06" y="340.00" width="6.01" height="8.00" fill="#1aff00"/><rect x="122.77" y="258.00" width="6.01" height="3.30" fill="#0000ff"/><rect x="122.77" y="260.10" width="6.01" height="76.30" fill="#ff0000"/><rect x="122.77" y="335.20" width="6.01" height="6.00" fill="#00ff00"/><rect x="122.77" y="340.00" width="6.01" height="8.00" fill="#00ff00"/><rect x="127.48" y="258.00" width="6.01" height="3.30" fill="#0000ff"/><rect x="127.48" y="260.10" width="6.01" height="65.10" fill="#ff0000"/><rect x="127.48" y="324.00" width="6.01" height="12.40" fill="#ff0000"/><rect x="127.48" y="335.20" width="6.01" height="6.00" fill="#00ff00"/><rect x="132.19" y="258.00" width="6.01" height="3.30" fill="#0000ff"/><rect x="132.19" y="260.10" width="6.01" height="65.10" fill="#ff0000"/><rect x="132.19" y="324.00" width="6.01" height="12.40" fill="#ff4000"/><rect x="132.19" y="335.20" width="6.01" height="6.00" fill="#00ff00"/><rect x="136.90" y="258.00" width="6.01" height="3.30" fill="#0000ff"/><rect x="136.90" y="260.10" width="6.01" height="65.10" fill="#ff0000"/><rect x="136.90" y="324.00" width="6.01" height="12.40" fill="#ff8000"/><rect x="136.90" y="335.20" width="6.01" height="6.00" fill="#00ff00"/><rect x="141.60" y="258.00" width="6.01" height="3.30" fill="#0000ff"/><rect x="141.60" y="260.10" width="6.01" height="65.10" fill="#ff0000"/><rect x="141.60" y="324.00" width="6.01" height="12.40" fill="#ffbf00"/><rect x="141.60" y="335.20" width="6.01" height="6.00" fill="#00ff00"/><rect x="146.31" y="258.00" width="6.01" height="3.30" fill="#0000ff"/><rect x="146.31" y="260.10" width="6.01" height="65.10" fill="#ff0000"/><rect x="146.31" y="324.00" width="6.01" height="12.40" fill="#ffff00"/><rect x="146.31" y="335.20" width="6.01" height="6.00" fill="#00ff00"/><rect x="151.02" y="258.00" width="6.01" height="3.30" fill="#0000ff"/><rect x="151.02" y="260.10" width="6.01" height="65.10" fill="#ff0000"/><rect x="151.02" y="324.00" width="6.01" height="12.40" fill="#bfff00"/><rect x="151.02" y="335.20" width="6.01" height="6.00" fill="#00ff00"/><rect x="155.73" y="258.00" width="6.01" height="3.30" fill="#0000ff"/><rect x="155.73" y="260.10" width="6.01" height="65.10" fill="#ff0000"/><rect x="155.73" y="324.00" width="6.01" height="12.40" fill="#80ff00"/><rect x="155.73" y="335.20" width="6.01" height="6.00" fill="#00ff00"/><rect x="160.44" y="258.00" width="6.01" height="3.30" fill="#0000ff"/><rect x="160.44" y="260.10" width="6.01" height="65.10" fill="#ff0000"/><rect x="160.44" y="324.00" width="6.01" height="12.40" fill="#40ff00"/><rect x="160.44" y="335.20" width="6.01" height="6.00" fill="#00ff00"/><rect x="165.14" y="258.00" width="6.01" height="3.30" fill="#0000ff"/><rect x="165.14" y="260.10" width="6.01" height="65.10" fill="#ff0000"/><rect x="165.14" y="324.00" width="6.01" height="12.40" fill="#1aff00"/><rect x="165.14" y="335.20" width="6.01" height="6.00" fill="#00ff00"/><rect x="169.85" y="258.00" width="6.01" height="3.30" fill="#0000ff"/><rect x="169.85" y="260.10" width="6.01" height="65.10" fill="#ff0000"/><rect x="169.85" y="324.00" width="6.01" height="12.40" fill="#00ff00"/><rect x="169.85" y="335.20" width="6.01" height="6.00" fill="#00ff00"/><rect x="174.56" y="258.00" width="6.01" height="3.30" fill="#0000ff"/><rect x="174.56" y="260.10" width="6.01" height="4.30" fill="#ff0000"/><rect x="174.56" y="263.20" width="6.01" height="55.80" fill="#ff0000"/><rect x="174.56" y="317.80" width="6.01" height="7.40" fill="#ff0000"/><rect x="174.56" y="324.00" width="6.01" height="17.20" fill="#00ff00"/><rect x="179.27" y="258.00" width="6.01" height="3.30" fill="#0000ff"/><rect x="179.27" y="260.10" width="6.01" height="4.30" fill="#ffcc00"/><rect x="179.27" y="263.20" width="6.01" height="55.80" fill="#ff0000"/><rect x="179.27" y="317.80" width="6.01" height="7.40" fill="#ff4000"/><rect x="179.27" y="324.00" width="6.01" height="17.20" fill="#00ff00"/><rect x="183.98" y="258.00" width="6.01" height="3.30" fill="#0000ff"/><rect x="183.98" y="260.10" width="6.01" height="4.30" fill="#80ff00"/><rect x="183.98" y="263.20" width="6.01" height="55.80" fill="#ff0000"/><rect x="183.98" y="317.80" width="6.01" height="7.40" fill="#ff8000"/><rect x="183.98" y="324.00" width="6.01" height="17.20" fill="#00ff00"/><rect x="188.68" y="258.00" width="6.01" height="3.30" fill="#0000ff"/><rect x="188.68" y="260.10" width="6.01" height="4.30" fill="#00ff00"/><rect x="188.68" y="263.20" width="6.01" height="55.80" fill="#ff0000"/><rect x="188.68" y="317.80" width="6.01" height="7.40" fill="#ffbf00"/><rect x="188.68" y="324.00" width="6.01" height="17.20" fill="#00ff00"/><rect x="193.39" y="258.00" width="6.01" height="3.30" fill="#0000ff"/><rect x="193.39" y="260.10" width="6.01" height="4.30" fill="#00ff80"/><rect x="193.39" y="263.20" width="6.01" height="55.80" fill="#ff0000"/><rect x="193.39" y="317.80" width="6.01" height="7.40" fill="#ffff00"/><rect x="193.39" y="324.00" width="6.01" height="17.20" fill="#00ff00"/><rect x="198.10" y="258.00" width="6.01" height="3.30" fill="#0000ff"/><rect x="198.10" y="260.10" width="6.01" height="4.30" fill="#00ffff"/><rect x="198.10" y="263.20" width="6.01" height="55.80" fill="#ff0000"/><rect x="198.10" y="317.80" width="6.01" height="7.40" fill="#bfff00"/><rect x="198.10" y="324.00" width="6.01" height="17.20" fill="#00ff00"/><rect x="202.81" y="258.00" width="6.01" height="3.30" fill="#0000ff"/><rect x="202.81" y="260.10" width="6.01" height="4.30" fill="#00a6ff"/><rect x="202.81" y="263.20" width="6.01" height="55.80" fill="#ff0000"/><rect x="202.81" y="317.80" width="6.01" height="7.40" fill="#80ff00"/><rect x="202.81" y="324.00" width="6.01" height="17.20" fill="#00ff00"/><rect x="207.52" y="258.00" width="6.01" height="3.30" fill="#0000ff"/><rect x="207.52" y="260.10" width="6.01" height="4.30" fill="#004cff"/><rect x="207.52" y="263.20" width="6.01" height="55.80" fill="#ff0000"/><rect x="207.52" y="317.80" width="6.01" height="7.40" fill="#40ff00"/><rect x="207.52" y="324.00" width="6.01" height="17.20" fill="#00ff00"/><rect x="212.22" y="258.00" width="6.01" height="3.30" fill="#0000ff"/><rect x="212.22" y="260.10" width="6.01" height="4.30" fill="#001aff"/><rect x="212.22" y="263.20" width="6.01" height="55.80" fill="#ff0000"/><rect x="212.22" y="317.80" width="6.01" height="7.40" fill="#1aff00"/><rect x="212.22" y="324.00" width="6.01" height="17.20" fill="#00ff00"/><rect x="216.93" y="258.00" width="6.01" height="3.30" fill="#0000ff"/><rect x="216.93" y="260.10" width="6.01" height="4.30" fill="#0000ff"/><rect x="216.93" y="263.20" width="6.01" height="55.80" fill="#ff0000"/><rect x="216.93" y="317.80" width="6.01" height="7.40" fill="#00ff00"/><rect x="216.93" y="324.00" width="6.01" height="17.20" fill="#00ff00"/><rect x="221.64" y="258.00" width="6.01" height="6.40" fill="#0000ff"/><rect x="221.64" y="263.20" width="6.01" height="4.00" fill="#ff0000"/><rect x="221.64" y="266.00" width="6.01" height="46.00" fill="#ff0000"/><rect x="221.64" y="310.80" width="6.01" height="8.20" fill="#ff0000"/><rect x="221.64" y="317.80" width="6.01" height="23.40" fill="#00ff00"/><rect x="226.35" y="258.00" width="6.01" height="6.40" fill="#0000ff"/><rect x="226.35" y="263.20" width="6.01" height="4.00" fill="#ffcc00"/><rect x="226.35" y="266.00" width="6.01" height="46.00" fill="#ff0000"/><rect x="226.35" y="310.80" width="6.01" height="8.20" fill="#ff4000"/><rect x="226.35" y="317.80" width="6.01" height="23.40" fill="#00ff00"/><rect x="231.06" y="258.00" width="6.01" height="6.40" fill="#0000ff"/><rect x="231.06" y="263.20" width="6.01" height="4.00" fill="#80ff00"/><rect x="231.06" y="266.00" width="6.01" height="46.00" fill="#ff0000"/><rect x="231.06" y="310.80" width="6.01" height="8.20" fill="#ff8000"/><rect x="231.06" y="317.80" width="6.01" height="23.40" fill="#00ff00"/><rect x="235.76" y="258.00" width="6.01" height="6.40" fill="#0000ff"/><rect x="235.76" y="263.20" width="6.01" height="4.00" fill="#00ff00"/><rect x="235.76" y="266.00" width="6.01" height="46.00" fill="#ff0000"/><rect x="235.76" y="310.80" width="6.01" height="8.20" fill="#ffbf00"/><rect x="235.76" y="317.80" width="6.01" height="23.40" fill="#00ff00"/><rect x="240.47" y="258.00" width="6.01" height="6.40" fill="#0000ff"/><rect x="240.47" y="263.20" width="6.01" height="4.00" fill="#00ff80"/><rect x="240.47" y="266.00" width="6.01" height="46.00" fill="#ff0000"/><rect x="240.47" y="310.80" width="6.01" height="8.20" fill="#ffff00"/><rect x="240.47" y="317.80" width="6.01" height="23.40" fill="#00ff00"/><rect x="245.18" y="258.00" width="6.01" height="6.40" fill="#0000ff"/><rect x="245.18" y="263.20" width="6.01" height="4.00" fill="#00ffff"/><rect x="245.18" y="266.00" width="6.01" height="46.00" fill="#ff0000"/><rect x="245.18" y="310.80" width="6.01" height="8.20" fill="#bfff00"/><rect x="245.18" y="317.80" width="6.01" height="23.40" fill="#00ff00"/><rect x="249.89" y="258.00" width="6.01" height="6.40" fill="#0000ff"/><rect x="249.89" y="263.20" width="6.01" height="4.00" fill="#00a6ff"/><rect x="249.89" y="266.00" width="6.01" height="46.00" fill="#ff0000"/><rect x="249.89" y="310.80" width="6.01" height="8.20" fill="#80ff00"/><rect x="249.89" y="317.80" width="6.01" height="23.40" fill="#00ff00"/><rect x="254.60" y="258.00" width="6.01" height="6.40" fill="#0000ff"/><rect x="254.60" y="263.20" width="6.01" height="4.00" fill="#004cff"/><rect x="254.60" y="266.00" width="6.01" height="46.00" fill="#ff0000"/><rect x="254.60" y="310.80" width="6.01" height="8.20" fill="#40ff00"/><rect x="254.60" y="317.80" width="6.01" height="23.40" fill="#00ff00"/><rect x="259.30" y="258.00" width="6.01" height="6.40" fill="#0000ff"/><rect x="259.30" y="263.20" width="6.01" height="4.00" fill="#001aff"/><rect x="259.30" y="266.00" width="6.01" height="46.00" fill="#ff0000"/><rect x="259.30" y="310.80" width="6.01" height="8.20" fill="#1aff00"/><rect x="259.30" y="317.80" width="6.01" height="23.40" fill="#00ff00"/><rect x="264.01" y="258.00" width="6.01" height="6.40" fill="#0000ff"/><rect x="264.01" y="263.20" width="6.01" height="4.00" fill="#0000ff"/><rect x="264.01" y="266.00" width="6.01" height="46.00" fill="#ff0000"/><rect x="264.01" y="310.80" width="6.01" height="8.20" fill="#00ff00"/><rect x="264.01" y="317.80" width="6.01" height="23.40" fill="#00ff00"/><rect x="268.72" y="258.00" width="6.01" height="9.20" fill="#0000ff"/><rect x="268.72" y="266.00" width="6.01" height="3.90" fill="#ff0000"/><rect x="268.72" y="268.70" width="6.01" height="27.50" fill="#ff0000"/><rect x="268.72" y="295.00" width="6.01" height="17.00" fill="#ff0000"/><rect x="268.72" y="310.80" width="6.01" height="30.40" fill="#00ff00"/><rect x="273.43" y="258.00" width="6.01" height="9.20" fill="#0000ff"/><rect x="273.43" y="266.00" width="6.01" height="3.90" fill="#ffcc00"/><rect x="273.43" y="268.70" width="6.01" height="27.50" fill="#ff0000"/><rect x="273.43" y="295.00" width="6.01" height="17.00" fill="#ff4000"/><rect x="273.43" y="310.80" width="6.01" height="30.40" fill="#00ff00"/><rect x="278.14" y="258.00" width="6.01" height="9.20" fill="#0000ff"/><rect x="278.14" y="266.00" width="6.01" height="3.90" fill="#80ff00"/><rect x="278.14" y="268.70" width="6.01" height="27.50" fill="#ff0000"/><rect x="278.14" y="295.00" width="6.01" height="17.00" fill="#ff8000"/><rect x="278.14" y="310.80" width="6.01" height="30.40" fill="#00ff00"/><rect x="282.84" y="258.00" width="6.01" height="9.20" fill="#0000ff"/><rect x="282.84" y="266.00" width="6.01" height="3.90" fill="#00ff00"/><rect x="282.84" y="268.70" width="6.01" height="27.50" fill="#ff0000"/><rect x="282.84" y="295.00" width="6.01" height="17.00" fill="#ffbf00"/><rect x="282.84" y="310.80" width="6.01" height="30.40" fill="#00ff00"/><rect x="287.55" y="258.00" width="6.01" height="9.20" fill="#0000ff"/><rect x="287.55" y="266.00" width="6.01" height="3.90" fill="#00ff80"/><rect x="287.55" y="268.70" width="6.01" height="27.50" fill="#ff0000"/><rect x="287.55" y="295.00" width="6.01" height="17.00" fill="#ffff00"/><rect x="287.55" y="310.80" width="6.01" height="30.40" fill="#00ff00"/><rect x="292.26" y="258.00" width="6.01" height="9.20" fill="#0000ff"/><rect x="292.26" y="266.00" width="6.01" height="3.90" fill="#00ffff"/><rect x="292.26" y="268.70" width="6.01" height="27.50" fill="#ff0000"/><rect x="292.26" y="295.00" width="6.01" height="17.00" fill="#bfff00"/><rect x="292.26" y="310.80" width="6.01" height="30.40" fill="#00ff00"/><rect x="296.97" y="258.00" width="6.01" height="9.20" fill="#0000ff"/><rect x="296.97" y="266.00" width="6.01" height="3.90" fill="#00a6ff"/><rect x="296.97" y="268.70" width="6.01" height="27.50" fill="#ff0000"/><rect x="296.97" y="295.00" width="6.01" height="17.00" fill="#80ff00"/><rect x="296.97" y="310.80" width="6.01" height="30.40" fill="#00ff00"/><rect x="301.68" y="258.00" width="6.01" height="9.20" fill="#0000ff"/><rect x="301.68" y="266.00" width="6.01" height="3.90" fill="#004cff"/><rect x="301.68" y="268.70" width="6.01" height="27.50" fill="#ff0000"/><rect x="301.68" y="295.00" width="6.01" height="17.00" fill="#40ff00"/><rect x="301.68" y="310.80" width="6.01" height="30.40" fill="#00ff00"/><rect x="306.38" y="258.00" width="6.01" height="9.20" fill="#0000ff"/><rect x="306.38" y="266.00" width="6.01" height="3.90" fill="#001aff"/><rect x="306.38" y="268.70" width="6.01" height="27.50" fill="#ff0000"/><rect x="306.38" y="295.00" width="6.01" height="17.00" fill="#1aff00"/><rect x="306.38" y="310.80" width="6.01" height="30.40" fill="#00ff00"/><rect x="311.09" y="258.00" width="6.01" height="9.20" fill="#0000ff"/><rect x="311.09" y="266.00" width="6.01" height="3.90" fill="#0000ff"/><rect x="311.09" y="268.70" width="6.01" height="27.50" fill="#ff0000"/><rect x="311.09" y="295.00" width="6.01" height="17.00" fill="#00ff00"/><rect x="311.09" y="310.80" width="6.01" height="30.40" fill="#00ff00"/><rect x="315.80" y="258.00" width="6.01" height="11.90" fill="#0000ff"/><rect x="315.80" y="268.70" width="6.01" height="1.50" fill="#ff0000"/><rect x="315.80" y="269.00" width="6.01" height="20.60" fill="#ff0000"/><rect x="315.80" y="288.40" width="6.01" height="7.80" fill="#ff0000"/><rect x="315.80" y="295.00" width="6.01" height="46.20" fill="#00ff00"/><rect x="320.51" y="258.00" width="6.01" height="11.90" fill="#0000ff"/><rect x="320.51" y="268.70" width="6.01" height="1.50" fill="#ffcc00"/><rect x="320.51" y="269.00" width="6.01" height="20.60" fill="#ff0000"/><rect x="320.51" y="288.40" width="6.01" height="7.80" fill="#ff4000"/><rect x="320.51" y="295.00" width="6.01" height="46.20" fill="#00ff00"/><rect x="325.22" y="258.00" width="6.01" height="11.90" fill="#0000ff"/><rect x="325.22" y="268.70" width="6.01" height="1.50" fill="#80ff00"/><rect x="325.22" y="269.00" width="6.01" height="20.60" fill="#ff0000"/><rect x="325.22" y="288.40" width="6.01" height="7.80" fill="#ff8000"/><rect x="325.22" y="295.00" width="6.01" height="46.20" fill="#00ff00"/><rect x="329.92" y="258.00" width="6.01" height="11.90" fill="#0000ff"/><rect x="329.92" y="268.70" width="6.01" height="1.50" fill="#00ff00"/><rect x="329.92" y="269.00" width="6.01" height="20.60" fill="#ff0000"/><rect x="329.92" y="288.40" width="6.01" height="7.80" fill="#ffbf00"/><rect x="329.92" y="295.00" width="6.01" height="46.20" fill="#00ff00"/><rect x="334.63" y="258.00" width="6.01" height="11.90" fill="#0000ff"/><rect x="334.63" y="268.70" width="6.01" height="1.50" fill="#00ff80"/><rect x="334.63" y="269.00" width="6.01" height="20.60" fill="#ff0000"/><rect x="334.63" y="288.40" width="6.01" height="7.80" fill="#ffff00"/><rect x="334.63" y="295.00" width="6.01" height="46.20" fill="#00ff00"/><rect x="339.34" y="258.00" width="6.01" height="11.90" fill="#0000ff"/><rect x="339.34" y="268.70" width="6.01" height="1.50" fill="#00ffff"/><rect x="339.34" y="269.00" width="6.01" height="20.60" fill="#ff0000"/><rect x="339.34" y="288.40" width="6.01" height="7.80" fill="#bfff00"/><rect x="339.34" y="295.00" width="6.01" height="46.20" fill="#00ff00"/><rect x="344.05" y="258.00" width="6.01" height="11.90" fill="#0000ff"/><rect x="344.05" y="268.70" width="6.01" height="1.50" fill="#00a6ff"/><rect x="344.05" y="269.00" width="6.01" height="20.60" fill="#ff0000"/><rect x="344.05" y="288.40" width="6.01" height="7.80" fill="#80ff00"/><rect x="344.05" y="295.00" width="6.01" height="46.20" fill="#00ff00"/><rect x="348.76" y="258.00" width="6.01" height="11.90" fill="#0000ff"/><rect x="348.76" y="268.70" width="6.01" height="1.50" fill="#004cff"/><rect x="348.76" y="269.00" width="6.01" height="20.60" fill="#ff0000"/><rect x="348.76" y="288.40" width="6.01" height="7.80" fill="#40ff00"/><rect x="348.76" y="295.00" width="6.01" height="46.20" fill="#00ff00"/><rect x="353.46" y="258.00" width="6.01" height="11.90" fill="#0000ff"/><rect x="353.46" y="268.70" width="6.01" height="1.50" fill="#001aff"/><rect x="353.46" y="269.00" width="6.01" height="20.60" fill="#ff0000"/><rect x="353.46" y="288.40" width="6.01" height="7.80" fill="#1aff00"/><rect x="353.46" y="295.00" width="6.01" height="46.20" fill="#00ff00"/><rect x="358.17" y="258.00" width="6.01" height="11.90" fill="#0000ff"/><rect x="358.17" y="268.70" width="6.01" height="1.50" fill="#0000ff"/><rect x="358.17" y="269.00" width="6.01" height="20.60" fill="#ff0000"/><rect x="358.17" y="288.40" width="6.01" height="7.80" fill="#00ff00"/><rect x="358.17" y="295.00" width="6.01" height="46.20" fill="#00ff00"/><rect x="362.88" y="258.00" width="6.01" height="9.00" fill="#0000ff"/><rect x="362.88" y="265.80" width="6.01" height="4.40" fill="#0000ff"/><rect x="362.88" y="269.00" width="6.01" height="5.60" fill="#ff0000"/><rect x="362.88" y="273.40" width="6.01" height="16.20" fill="#ff0000"/><rect x="362.88" y="288.40" width="6.01" height="52.80" fill="#00ff00"/><rect x="367.59" y="258.00" width="6.01" height="9.00" fill="#0000ff"/><rect x="367.59" y="265.80" width="6.01" height="4.40" fill="#0000ff"/><rect x="367.59" y="269.00" width="6.01" height="5.60" fill="#ff0000"/><rect x="367.59" y="273.40" width="6.01" height="16.20" fill="#ff4000"/><rect x="367.59" y="288.40" width="6.01" height="52.80" fill="#00ff00"/><rect x="372.30" y="258.00" width="6.01" height="9.00" fill="#0000ff"/><rect x="372.30" y="265.80" width="6.01" height="4.40" fill="#001aff"/><rect x="372.30" y="269.00" width="6.01" height="5.60" fill="#ff0000"/><rect x="372.30" y="273.40" width="6.01" height="16.20" fill="#ff8000"/><rect x="372.30" y="288.40" width="6.01" height="52.80" fill="#00ff00"/><rect x="377.00" y="258.00" width="6.01" height="9.00" fill="#0000ff"/><rect x="377.00" y="265.80" width="6.01" height="4.40" fill="#004cff"/><rect x="377.00" y="269.00" width="6.01" height="5.60" fill="#ff0000"/><rect x="377.00" y="273.40" width="6.01" height="16.20" fill="#ffbf00"/><rect x="377.00" y="288.40" width="6.01" height="52.80" fill="#00ff00"/><rect x="381.71" y="258.00" width="6.01" height="9.00" fill="#0000ff"/><rect x="381.71" y="265.80" width="6.01" height="4.40" fill="#00a6ff"/><rect x="381.71" y="269.00" width="6.01" height="5.60" fill="#ff0000"/><rect x="381.71" y="273.40" width="6.01" height="16.20" fill="#ffff00"/><rect x="381.71" y="288.40" width="6.01" height="52.80" fill="#00ff00"/><rect x="386.42" y="258.00" width="6.01" height="9.00" fill="#0000ff"/><rect x="386.42" y="265.80" width="6.01" height="4.40" fill="#00ffff"/><rect x="386.42" y="269.00" width="6.01" height="5.60" fill="#ff0000"/><rect x="386.42" y="273.40" width="6.01" height="16.20" fill="#bfff00"/><rect x="386.42" y="288.40" width="6.01" height="52.80" fill="#00ff00"/><rect x="391.13" y="258.00" width="6.01" height="9.00" fill="#0000ff"/><rect x="391.13" y="265.80" width="6.01" height="4.40" fill="#00ff80"/><rect x="391.13" y="269.00" width="6.01" height="5.60" fill="#ff0000"/><rect x="391.13" y="273.40" width="6.01" height="16.20" fill="#80ff00"/><rect x="391.13" y="288.40" width="6.01" height="52.80" fill="#00ff00"/><rect x="395.84" y="258.00" width="6.01" height="9.00" fill="#0000ff"/><rect x="395.84" y="265.80" width="6.01" height="4.40" fill="#00ff00"/><rect x="395.84" y="269.00" width="6.01" height="5.60" fill="#ff0000"/><rect x="395.84" y="273.40" width="6.01" height="16.20" fill="#40ff00"/><rect x="395.84" y="288.40" width="6.01" height="52.80" fill="#00ff00"/><rect x="400.54" y="258.00" width="6.01" height="9.00" fill="#0000ff"/><rect x="400.54" y="265.80" width="6.01" height="4.40" fill="#80ff00"/><rect x="400.54" y="269.00" width="6.01" height="5.60" fill="#ff0000"/><rect x="400.54" y="273.40" width="6.01" height="16.20" fill="#1aff00"/><rect x="400.54" y="288.40" width="6.01" height="52.80" fill="#00ff00"/><rect x="405.25" y="258.00" width="6.01" height="9.00" fill="#0000ff"/><rect x="405.25" y="265.80" width="6.01" height="4.40" fill="#ffcc00"/><rect x="405.25" y="269.00" width="6.01" height="5.60" fill="#ff0000"/><rect x="405.25" y="273.40" width="6.01" height="16.20" fill="#00ff00"/><rect x="405.25" y="288.40" width="6.01" height="52.80" fill="#00ff00"/><rect x="409.96" y="258.00" width="6.01" height="9.00" fill="#0000ff"/><rect x="409.96" y="265.80" width="6.01" height="4.10" fill="#ff0000"/><rect x="409.96" y="268.70" width="6.01" height="5.90" fill="#ff0000"/><rect x="409.96" y="273.40" width="6.01" height="67.80" fill="#00ff00"/><rect x="414.67" y="258.00" width="6.01" height="9.00" fill="#0000ff"/><rect x="414.67" y="265.80" width="6.01" height="4.10" fill="#ffcc00"/><rect x="414.67" y="268.70" width="6.01" height="5.90" fill="#ff4000"/><rect x="414.67" y="273.40" width="6.01" height="67.80" fill="#00ff00"/><rect x="419.38" y="258.00" width="6.01" height="9.00" fill="#0000ff"/><rect x="419.38" y="265.80" width="6.01" height="4.10" fill="#80ff00"/><rect x="419.38" y="268.70" width="6.01" height="5.90" fill="#ff8000"/><rect x="419.38" y="273.40" width="6.01" height="67.80" fill="#00ff00"/><rect x="424.08" y="258.00" width="6.01" height="9.00" fill="#0000ff"/><rect x="424.08" y="265.80" width="6.01" height="4.10" fill="#00ff00"/><rect x="424.08" y="268.70" width="6.01" height="5.90" fill="#ffbf00"/><rect x="424.08" y="273.40" width="6.01" height="67.80" fill="#00ff00"/><rect x="428.79" y="258.00" width="6.01" height="9.00" fill="#0000ff"/><rect x="428.79" y="265.80" width="6.01" height="4.10" fill="#00ff80"/><rect x="428.79" y="268.70" width="6.01" height="5.90" fill="#ffff00"/><rect x="428.79" y="273.40" width="6.01" height="67.80" fill="#00ff00"/><rect x="433.50" y="258.00" width="6.01" height="9.00" fill="#0000ff"/><rect x="433.50" y="265.80" width="6.01" height="4.10" fill="#00ffff"/><rect x="433.50" y="268.70" width="6.01" height="5.90" fill="#bfff00"/><rect x="433.50" y="273.40" width="6.01" height="67.80" fill="#00ff00"/><rect x="438.21" y="258.00" width="6.01" height="9.00" fill="#0000ff"/><rect x="438.21" y="265.80" width="6.01" height="4.10" fill="#00a6ff"/><rect x="438.21" y="268.70" width="6.01" height="5.90" fill="#80ff00"/><rect x="438.21" y="273.40" width="6.01" height="67.80" fill="#00ff00"/><rect x="442.92" y="258.00" width="6.01" height="9.00" fill="#0000ff"/><rect x="442.92" y="265.80" width="6.01" height="4.10" fill="#004cff"/><rect x="442.92" y="268.70" width="6.01" height="5.90" fill="#40ff00"/><rect x="442.92" y="273.40" width="6.01" height="67.80" fill="#00ff00"/><rect x="447.62" y="258.00" width="6.01" height="9.00" fill="#0000ff"/><rect x="447.62" y="265.80" width="6.01" height="4.10" fill="#001aff"/><rect x="447.62" y="268.70" width="6.01" height="5.90" fill="#1aff00"/><rect x="447.62" y="273.40" width="6.01" height="67.80" fill="#00ff00"/><rect x="452.33" y="258.00" width="6.01" height="9.00" fill="#0000ff"/><rect x="452.33" y="265.80" width="6.01" height="4.10" fill="#0000ff"/><rect x="452.33" y="268.70" width="6.01" height="5.90" fill="#00ff00"/><rect x="452.33" y="273.40" width="6.01" height="67.80" fill="#00ff00"/><rect x="457.04" y="258.00" width="6.01" height="11.90" fill="#0000ff"/><rect x="457.04" y="268.70" width="6.01" height="14.60" fill="#00ff00"/><rect x="457.04" y="282.10" width="6.01" height="59.10" fill="#00ff00"/><rect x="461.75" y="258.00" width="6.01" height="11.90" fill="#0000ff"/><rect x="461.75" y="268.70" width="6.01" height="14.60" fill="#00ff0d"/><rect x="461.75" y="282.10" width="6.01" height="59.10" fill="#00ff00"/><rect x="466.46" y="258.00" width="6.01" height="11.90" fill="#0000ff"/><rect x="466.46" y="268.70" width="6.01" height="14.60" fill="#00ff4c"/><rect x="466.46" y="282.10" width="6.01" height="59.10" fill="#00ff00"/><rect x="471.16" y="258.00" width="6.01" height="11.90" fill="#0000ff"/><rect x="471.16" y="268.70" width="6.01" height="14.60" fill="#00ff99"/><rect x="471.16" y="282.10" width="6.01" height="59.10" fill="#00ff00"/><rect x="475.87" y="258.00" width="6.01" height="11.90" fill="#0000ff"/><rect x="475.87" y="268.70" width="6.01" height="14.60" fill="#00ffe5"/><rect x="475.87" y="282.10" width="6.01" height="59.10" fill="#00ff00"/><rect x="480.58" y="258.00" width="6.01" height="11.90" fill="#0000ff"/><rect x="480.58" y="268.70" width="6.01" height="14.60" fill="#00ffff"/><rect x="480.58" y="282.10" width="6.01" height="59.10" fill="#00ff00"/><rect x="485.29" y="258.00" width="6.01" height="11.90" fill="#0000ff"/><rect x="485.29" y="268.70" width="6.01" height="14.60" fill="#00bfff"/><rect x="485.29" y="282.10" width="6.01" height="59.10" fill="#00ff00"/><rect x="490.00" y="258.00" width="6.01" height="11.90" fill="#0000ff"/><rect x="490.00" y="268.70" width="6.01" height="14.60" fill="#0080ff"/><rect x="490.00" y="282.10" width="6.01" height="59.10" fill="#00ff00"/><rect x="494.70" y="258.00" width="6.01" height="11.90" fill="#0000ff"/><rect x="494.70" y="268.70" width="6.01" height="14.60" fill="#0061ff"/><rect x="494.70" y="282.10" width="6.01" height="59.10" fill="#00ff00"/><rect x="499.41" y="258.00" width="6.01" height="11.90" fill="#0000ff"/><rect x="499.41" y="268.70" width="6.01" height="14.60" fill="#0033ff"/><rect x="499.41" y="282.10" width="6.01" height="59.10" fill="#00ff00"/><rect x="504.12" y="258.00" width="6.01" height="25.30" fill="#0000ff"/><rect x="504.12" y="282.10" width="6.01" height="11.10" fill="#00ff00"/><rect x="504.12" y="292.00" width="6.01" height="4.00" fill="#00ff00"/><rect x="504.12" y="294.80" width="6.01" height="46.40" fill="#00ff00"/><rect x="508.83" y="258.00" width="6.01" height="25.30" fill="#0000ff"/><rect x="508.83" y="282.10" width="6.01" height="11.10" fill="#00ff0d"/><rect x="508.83" y="292.00" width="6.01" height="4.00" fill="#00ff00"/><rect x="508.83" y="294.80" width="6.01" height="46.40" fill="#00ff00"/><rect x="513.54" y="258.00" width="6.01" height="25.30" fill="#0000ff"/><rect x="513.54" y="282.10" width="6.01" height="11.10" fill="#00ff4c"/><rect x="513.54" y="292.00" width="6.01" height="4.00" fill="#1aff00"/><rect x="513.54" y="294.80" width="6.01" height="46.40" fill="#00ff00"/><rect x="518.24" y="258.00" width="6.01" height="25.30" fill="#0000ff"/><rect x="518.24" y="282.10" width="6.01" height="11.10" fill="#00ff99"/><rect x="518.24" y="292.00" width="6.01" height="4.00" fill="#40ff00"/><rect x="518.24" y="294.80" width="6.01" height="46.40" fill="#00ff00"/><rect x="522.95" y="258.00" width="6.01" height="25.30" fill="#0000ff"/><rect x="522.95" y="282.10" width="6.01" height="11.10" fill="#00ffe5"/><rect x="522.95" y="292.00" width="6.01" height="4.00" fill="#80ff00"/><rect x="522.95" y="294.80" width="6.01" height="46.40" fill="#00ff00"/><rect x="527.66" y="258.00" width="6.01" height="25.30" fill="#0000ff"/><rect x="527.66" y="282.10" width="6.01" height="11.10" fill="#00ffff"/><rect x="527.66" y="292.00" width="6.01" height="4.00" fill="#bfff00"/><rect x="527.66" y="294.80" width="6.01" height="46.40" fill="#00ff00"/><rect x="532.37" y="258.00" width="6.01" height="25.30" fill="#0000ff"/><rect x="532.37" y="282.10" width="6.01" height="11.10" fill="#00bfff"/><rect x="532.37" y="292.00" width="6.01" height="4.00" fill="#ffff00"/><rect x="532.37" y="294.80" width="6.01" height="46.40" fill="#00ff00"/><rect x="537.08" y="258.00" width="6.01" height="25.30" fill="#0000ff"/><rect x="537.08" y="282.10" width="6.01" height="11.10" fill="#0080ff"/><rect x="537.08" y="292.00" width="6.01" height="4.00" fill="#ffbf00"/><rect x="537.08" y="294.80" width="6.01" height="46.40" fill="#00ff00"/><rect x="541.78" y="258.00" width="6.01" height="25.30" fill="#0000ff"/><rect x="541.78" y="282.10" width="6.01" height="11.10" fill="#0061ff"/><rect x="541.78" y="292.00" width="6.01" height="4.00" fill="#ff8000"/><rect x="541.78" y="294.80" width="6.01" height="46.40" fill="#00ff00"/><rect x="546.49" y="258.00" width="6.01" height="25.30" fill="#0000ff"/><rect x="546.49" y="282.10" width="6.01" height="11.10" fill="#0033ff"/><rect x="546.49" y="292.00" width="6.01" height="4.00" fill="#ff4000"/><rect x="546.49" y="294.80" width="6.01" height="46.40" fill="#00ff00"/></g><rect x="552.3" y="81.5" width="12" height="64.7" fill="url(#cb1)"/><rect x="552.3" y="156.2" width="12" height="64.6" fill="url(#cb2)"/><rect x="552.3" y="273" width="12" height="45.4" fill="url(#cb3)"/><line x1="71.40" y1="71.35" x2="80.00" y2="71.35" stroke="#0000b4" stroke-width="1.1"/><line x1="75.50" y1="74.33" x2="80.00" y2="74.33" stroke="#0000b4" stroke-width="1.1"/><line x1="75.50" y1="77.30" x2="80.00" y2="77.30" stroke="#0000b4" stroke-width="1.1"/><line x1="75.50" y1="80.28" x2="80.00" y2="80.28" stroke="#0000b4" stroke-width="1.1"/><line x1="75.50" y1="83.25" x2="80.00" y2="83.25" stroke="#0000b4" stroke-width="1.1"/><line x1="71.40" y1="86.23" x2="80.00" y2="86.23" stroke="#0000b4" stroke-width="1.1"/><line x1="75.50" y1="89.21" x2="80.00" y2="89.21" stroke="#0000b4" stroke-width="1.1"/><line x1="75.50" y1="92.18" x2="80.00" y2="92.18" stroke="#0000b4" stroke-width="1.1"/><line x1="75.50" y1="95.16" x2="80.00" y2="95.16" stroke="#0000b4" stroke-width="1.1"/><line x1="75.50" y1="98.13" x2="80.00" y2="98.13" stroke="#0000b4" stroke-width="1.1"/><line x1="71.40" y1="101.11" x2="80.00" y2="101.11" stroke="#0000b4" stroke-width="1.1"/><line x1="75.50" y1="104.09" x2="80.00" y2="104.09" stroke="#0000b4" stroke-width="1.1"/><line x1="75.50" y1="107.06" x2="80.00" y2="107.06" stroke="#0000b4" stroke-width="1.1"/><line x1="75.50" y1="110.04" x2="80.00" y2="110.04" stroke="#0000b4" stroke-width="1.1"/><line x1="75.50" y1="113.01" x2="80.00" y2="113.01" stroke="#0000b4" stroke-width="1.1"/><line x1="71.40" y1="115.99" x2="80.00" y2="115.99" stroke="#0000b4" stroke-width="1.1"/><line x1="75.50" y1="118.97" x2="80.00" y2="118.97" stroke="#0000b4" stroke-width="1.1"/><line x1="75.50" y1="121.94" x2="80.00" y2="121.94" stroke="#0000b4" stroke-width="1.1"/><line x1="75.50" y1="124.92" x2="80.00" y2="124.92" stroke="#0000b4" stroke-width="1.1"/><line x1="75.50" y1="127.89" x2="80.00" y2="127.89" stroke="#0000b4" stroke-width="1.1"/><line x1="71.40" y1="130.87" x2="80.00" y2="130.87" stroke="#0000b4" stroke-width="1.1"/><line x1="75.50" y1="133.85" x2="80.00" y2="133.85" stroke="#0000b4" stroke-width="1.1"/><line x1="75.50" y1="136.82" x2="80.00" y2="136.82" stroke="#0000b4" stroke-width="1.1"/><line x1="75.50" y1="139.80" x2="80.00" y2="139.80" stroke="#0000b4" stroke-width="1.1"/><line x1="75.50" y1="142.77" x2="80.00" y2="142.77" stroke="#0000b4" stroke-width="1.1"/><line x1="71.40" y1="145.75" x2="80.00" y2="145.75" stroke="#0000b4" stroke-width="1.1"/><line x1="71.40" y1="145.90" x2="80.00" y2="145.90" stroke="#5a5ad8" stroke-width="1.1"/><line x1="75.50" y1="148.89" x2="80.00" y2="148.89" stroke="#6a6ae4" stroke-width="1.1"/><line x1="75.50" y1="151.88" x2="80.00" y2="151.88" stroke="#6a6ae4" stroke-width="1.1"/><line x1="75.50" y1="154.87" x2="80.00" y2="154.87" stroke="#6a6ae4" stroke-width="1.1"/><line x1="75.50" y1="157.86" x2="80.00" y2="157.86" stroke="#6a6ae4" stroke-width="1.1"/><line x1="71.40" y1="160.85" x2="80.00" y2="160.85" stroke="#5a5ad8" stroke-width="1.1"/><line x1="75.50" y1="163.84" x2="80.00" y2="163.84" stroke="#6a6ae4" stroke-width="1.1"/><line x1="75.50" y1="166.83" x2="80.00" y2="166.83" stroke="#6a6ae4" stroke-width="1.1"/><line x1="75.50" y1="169.82" x2="80.00" y2="169.82" stroke="#6a6ae4" stroke-width="1.1"/><line x1="75.50" y1="172.81" x2="80.00" y2="172.81" stroke="#6a6ae4" stroke-width="1.1"/><line x1="71.40" y1="175.80" x2="80.00" y2="175.80" stroke="#5a5ad8" stroke-width="1.1"/><line x1="75.50" y1="178.79" x2="80.00" y2="178.79" stroke="#6a6ae4" stroke-width="1.1"/><line x1="75.50" y1="181.78" x2="80.00" y2="181.78" stroke="#6a6ae4" stroke-width="1.1"/><line x1="75.50" y1="184.77" x2="80.00" y2="184.77" stroke="#6a6ae4" stroke-width="1.1"/><line x1="75.50" y1="187.76" x2="80.00" y2="187.76" stroke="#6a6ae4" stroke-width="1.1"/><line x1="71.40" y1="190.75" x2="80.00" y2="190.75" stroke="#5a5ad8" stroke-width="1.1"/><line x1="75.50" y1="193.74" x2="80.00" y2="193.74" stroke="#6a6ae4" stroke-width="1.1"/><line x1="75.50" y1="196.73" x2="80.00" y2="196.73" stroke="#6a6ae4" stroke-width="1.1"/><line x1="75.50" y1="199.72" x2="80.00" y2="199.72" stroke="#6a6ae4" stroke-width="1.1"/><line x1="75.50" y1="202.71" x2="80.00" y2="202.71" stroke="#6a6ae4" stroke-width="1.1"/><line x1="71.40" y1="205.70" x2="80.00" y2="205.70" stroke="#5a5ad8" stroke-width="1.1"/><line x1="75.50" y1="208.69" x2="80.00" y2="208.69" stroke="#6a6ae4" stroke-width="1.1"/><line x1="75.50" y1="211.68" x2="80.00" y2="211.68" stroke="#6a6ae4" stroke-width="1.1"/><line x1="75.50" y1="214.67" x2="80.00" y2="214.67" stroke="#6a6ae4" stroke-width="1.1"/><line x1="75.50" y1="217.66" x2="80.00" y2="217.66" stroke="#6a6ae4" stroke-width="1.1"/><line x1="71.40" y1="220.65" x2="80.00" y2="220.65" stroke="#5a5ad8" stroke-width="1.1"/><line x1="73.20" y1="220.60" x2="80.00" y2="220.60" stroke="#3a3ad0" stroke-width="1.2"/><line x1="76.20" y1="230.53" x2="80.00" y2="230.53" stroke="#0000b4" stroke-width="1"/><line x1="76.20" y1="240.46" x2="80.00" y2="240.46" stroke="#0000b4" stroke-width="1"/><line x1="76.20" y1="250.39" x2="80.00" y2="250.39" stroke="#0000b4" stroke-width="1"/><line x1="76.20" y1="260.32" x2="80.00" y2="260.32" stroke="#0000b4" stroke-width="1"/><line x1="73.20" y1="270.25" x2="80.00" y2="270.25" stroke="#0000b4" stroke-width="1.2"/><line x1="76.20" y1="280.18" x2="80.00" y2="280.18" stroke="#0000b4" stroke-width="1"/><line x1="76.20" y1="290.11" x2="80.00" y2="290.11" stroke="#0000b4" stroke-width="1"/><line x1="76.20" y1="300.04" x2="80.00" y2="300.04" stroke="#0000b4" stroke-width="1"/><line x1="76.20" y1="309.97" x2="80.00" y2="309.97" stroke="#0000b4" stroke-width="1"/><line x1="73.20" y1="319.90" x2="80.00" y2="319.90" stroke="#0000b4" stroke-width="1.2"/><line x1="76.20" y1="329.83" x2="80.00" y2="329.83" stroke="#0000b4" stroke-width="1"/><line x1="76.20" y1="339.76" x2="80.00" y2="339.76" stroke="#0000b4" stroke-width="1"/><line x1="76.20" y1="349.69" x2="80.00" y2="349.69" stroke="#0000b4" stroke-width="1"/><line x1="76.20" y1="359.62" x2="80.00" y2="359.62" stroke="#0000b4" stroke-width="1"/><line x1="73.20" y1="369.55" x2="80.00" y2="369.55" stroke="#3a3ad0" stroke-width="1.2"/><line x1="80.25" y1="71.00" x2="80.25" y2="376.00" stroke="#0000b4" stroke-width="1.0"/><line x1="71.40" y1="71.35" x2="565.00" y2="71.35" stroke="#10108c" stroke-width="1.3"/><line x1="80.40" y1="72.45" x2="551.40" y2="72.45" stroke="#f4ecf8" stroke-width="0.9"/><line x1="79.4" y1="145.8" x2="552" y2="145.8" stroke="#0a2470" stroke-width="1.5" opacity="0.85"/><line x1="80.40" y1="147.30" x2="551.40" y2="147.30" stroke="#f4f4ff" stroke-width="1.5"/><line x1="79.40" y1="220.80" x2="552.00" y2="220.80" stroke="#0030e8" stroke-width="1.5"/><line x1="551.80" y1="71.00" x2="551.80" y2="376.00" stroke="#0000b4" stroke-width="1.1"/><line x1="564.60" y1="71.00" x2="564.60" y2="370.50" stroke="#0000b4" stroke-width="1.2"/><line x1="551.00" y1="370.00" x2="565.00" y2="370.00" stroke="#0000b4" stroke-width="1"/><line x1="315.90" y1="71.80" x2="315.90" y2="73.60" stroke="#5a3aa8" stroke-width="1.2"/><line x1="315.90" y1="145.60" x2="315.90" y2="148.20" stroke="#4a4aa8" stroke-width="1.2"/><line x1="315.90" y1="221.00" x2="315.90" y2="228.40" stroke="#5a5ab8" stroke-width="1.4"/><line x1="80.20" y1="369.60" x2="80.20" y2="376.20" stroke="#0000b4" stroke-width="1.1"/><line x1="127.30" y1="369.60" x2="127.30" y2="373.30" stroke="#3a3ac8" stroke-width="1"/><line x1="174.40" y1="369.60" x2="174.40" y2="373.30" stroke="#3a3ac8" stroke-width="1"/><line x1="221.50" y1="369.60" x2="221.50" y2="373.30" stroke="#3a3ac8" stroke-width="1"/><line x1="268.60" y1="369.60" x2="268.60" y2="373.30" stroke="#3a3ac8" stroke-width="1"/><line x1="315.70" y1="369.60" x2="315.70" y2="376.20" stroke="#0000b4" stroke-width="1.1"/><line x1="362.80" y1="369.60" x2="362.80" y2="373.30" stroke="#3a3ac8" stroke-width="1"/><line x1="409.90" y1="369.60" x2="409.90" y2="373.30" stroke="#3a3ac8" stroke-width="1"/><line x1="457.00" y1="369.60" x2="457.00" y2="373.30" stroke="#3a3ac8" stroke-width="1"/><line x1="504.10" y1="369.60" x2="504.10" y2="373.30" stroke="#3a3ac8" stroke-width="1"/><line x1="551.20" y1="369.60" x2="551.20" y2="376.20" stroke="#0000b4" stroke-width="1.1"/><line x1="564.60" y1="71.60" x2="572.20" y2="71.60" stroke="#0000b4" stroke-width="1"/><line x1="564.60" y1="75.33" x2="568.60" y2="75.33" stroke="#0000b4" stroke-width="1"/><line x1="564.60" y1="79.07" x2="568.60" y2="79.07" stroke="#0000b4" stroke-width="1"/><line x1="564.60" y1="82.80" x2="568.60" y2="82.80" stroke="#0000b4" stroke-width="1"/><line x1="564.60" y1="86.54" x2="568.60" y2="86.54" stroke="#0000b4" stroke-width="1"/><line x1="564.60" y1="90.27" x2="572.20" y2="90.27" stroke="#0000b4" stroke-width="1"/><line x1="564.60" y1="94.01" x2="568.60" y2="94.01" stroke="#0000b4" stroke-width="1"/><line x1="564.60" y1="97.74" x2="568.60" y2="97.74" stroke="#0000b4" stroke-width="1"/><line x1="564.60" y1="101.48" x2="568.60" y2="101.48" stroke="#0000b4" stroke-width="1"/><line x1="564.60" y1="105.22" x2="568.60" y2="105.22" stroke="#0000b4" stroke-width="1"/><line x1="564.60" y1="108.95" x2="572.20" y2="108.95" stroke="#0000b4" stroke-width="1"/><line x1="564.60" y1="112.69" x2="568.60" y2="112.69" stroke="#0000b4" stroke-width="1"/><line x1="564.60" y1="116.42" x2="568.60" y2="116.42" stroke="#0000b4" stroke-width="1"/><line x1="564.60" y1="120.16" x2="568.60" y2="120.16" stroke="#0000b4" stroke-width="1"/><line x1="564.60" y1="123.89" x2="568.60" y2="123.89" stroke="#0000b4" stroke-width="1"/><line x1="564.60" y1="127.62" x2="572.20" y2="127.62" stroke="#0000b4" stroke-width="1"/><line x1="564.60" y1="131.36" x2="568.60" y2="131.36" stroke="#0000b4" stroke-width="1"/><line x1="564.60" y1="135.09" x2="568.60" y2="135.09" stroke="#0000b4" stroke-width="1"/><line x1="564.60" y1="138.83" x2="568.60" y2="138.83" stroke="#0000b4" stroke-width="1"/><line x1="564.60" y1="142.56" x2="568.60" y2="142.56" stroke="#0000b4" stroke-width="1"/><line x1="564.60" y1="146.30" x2="572.20" y2="146.30" stroke="#0000b4" stroke-width="1"/><line x1="564.60" y1="146.30" x2="572.20" y2="146.30" stroke="#0000b4" stroke-width="1"/><line x1="564.60" y1="150.04" x2="568.60" y2="150.04" stroke="#0000b4" stroke-width="1"/><line x1="564.60" y1="153.77" x2="568.60" y2="153.77" stroke="#0000b4" stroke-width="1"/><line x1="564.60" y1="157.51" x2="568.60" y2="157.51" stroke="#0000b4" stroke-width="1"/><line x1="564.60" y1="161.24" x2="568.60" y2="161.24" stroke="#0000b4" stroke-width="1"/><line x1="564.60" y1="164.98" x2="572.20" y2="164.98" stroke="#0000b4" stroke-width="1"/><line x1="564.60" y1="168.71" x2="568.60" y2="168.71" stroke="#0000b4" stroke-width="1"/><line x1="564.60" y1="172.45" x2="568.60" y2="172.45" stroke="#0000b4" stroke-width="1"/><line x1="564.60" y1="176.18" x2="568.60" y2="176.18" stroke="#0000b4" stroke-width="1"/><line x1="564.60" y1="179.92" x2="568.60" y2="179.92" stroke="#0000b4" stroke-width="1"/><line x1="564.60" y1="183.65" x2="572.20" y2="183.65" stroke="#0000b4" stroke-width="1"/><line x1="564.60" y1="187.39" x2="568.60" y2="187.39" stroke="#0000b4" stroke-width="1"/><line x1="564.60" y1="191.12" x2="568.60" y2="191.12" stroke="#0000b4" stroke-width="1"/><line x1="564.60" y1="194.86" x2="568.60" y2="194.86" stroke="#0000b4" stroke-width="1"/><line x1="564.60" y1="198.59" x2="568.60" y2="198.59" stroke="#0000b4" stroke-width="1"/><line x1="564.60" y1="202.33" x2="572.20" y2="202.33" stroke="#0000b4" stroke-width="1"/><line x1="564.60" y1="206.06" x2="568.60" y2="206.06" stroke="#0000b4" stroke-width="1"/><line x1="564.60" y1="209.80" x2="568.60" y2="209.80" stroke="#0000b4" stroke-width="1"/><line x1="564.60" y1="213.53" x2="568.60" y2="213.53" stroke="#0000b4" stroke-width="1"/><line x1="564.60" y1="217.27" x2="568.60" y2="217.27" stroke="#0000b4" stroke-width="1"/><line x1="564.60" y1="221.00" x2="572.20" y2="221.00" stroke="#0000b4" stroke-width="1"/><line x1="564.60" y1="295.50" x2="572.00" y2="295.50" stroke="#0000b4" stroke-width="1.1"/><line x1="564.60" y1="273.07" x2="568.60" y2="273.07" stroke="#0000b4" stroke-width="1"/><line x1="564.60" y1="259.95" x2="568.60" y2="259.95" stroke="#0000b4" stroke-width="1"/><line x1="564.60" y1="250.65" x2="568.60" y2="250.65" stroke="#0000b4" stroke-width="1"/><line x1="564.60" y1="243.43" x2="568.60" y2="243.43" stroke="#0000b4" stroke-width="1"/><line x1="564.60" y1="237.53" x2="568.60" y2="237.53" stroke="#0000b4" stroke-width="1"/><line x1="564.60" y1="232.54" x2="568.60" y2="232.54" stroke="#0000b4" stroke-width="1"/><line x1="564.60" y1="228.22" x2="568.60" y2="228.22" stroke="#0000b4" stroke-width="1"/><line x1="564.60" y1="224.41" x2="568.60" y2="224.41" stroke="#0000b4" stroke-width="1"/><line x1="564.60" y1="221.00" x2="572.00" y2="221.00" stroke="#3a3ad0" stroke-width="1.1"/><line x1="564.60" y1="370.00" x2="572.00" y2="370.00" stroke="#0000b4" stroke-width="1.1"/><line x1="564.60" y1="347.57" x2="568.60" y2="347.57" stroke="#0000b4" stroke-width="1"/><line x1="564.60" y1="334.45" x2="568.60" y2="334.45" stroke="#0000b4" stroke-width="1"/><line x1="564.60" y1="325.15" x2="568.60" y2="325.15" stroke="#0000b4" stroke-width="1"/><line x1="564.60" y1="317.93" x2="568.60" y2="317.93" stroke="#0000b4" stroke-width="1"/><line x1="564.60" y1="312.03" x2="568.60" y2="312.03" stroke="#0000b4" stroke-width="1"/><line x1="564.60" y1="307.04" x2="568.60" y2="307.04" stroke="#0000b4" stroke-width="1"/><line x1="564.60" y1="302.72" x2="568.60" y2="302.72" stroke="#0000b4" stroke-width="1"/><line x1="564.60" y1="298.91" x2="568.60" y2="298.91" stroke="#0000b4" stroke-width="1"/><text transform="translate(464.7 58.6) scale(0.700 1)" font-size="13.8" font-weight="bold" fill="#0000ac" stroke="#0000ac" stroke-width="0.15"><tspan x="0" textLength="59.4" lengthAdjust="spacing">Interpex</tspan> <tspan x="68.4" textLength="56.6" lengthAdjust="spacing">Limited</tspan></text><text transform="translate(67.28 80.10) scale(0.600 1)" font-size="9" font-weight="normal" fill="#0000c4" stroke="#0000c4" stroke-width="0.10">0</text><text transform="translate(56.42 89.80) scale(0.600 1)" font-size="9" font-weight="normal" fill="#0000c4" textLength="24.13" lengthAdjust="spacing" stroke="#0000c4" stroke-width="0.10">5000</text><text transform="translate(52.80 104.80) scale(0.600 1)" font-size="9" font-weight="normal" fill="#0000c4" textLength="30.17" lengthAdjust="spacing" stroke="#0000c4" stroke-width="0.10">10000</text><text transform="translate(52.80 119.80) scale(0.600 1)" font-size="9" font-weight="normal" fill="#0000c4" textLength="30.17" lengthAdjust="spacing" stroke="#0000c4" stroke-width="0.10">15000</text><text transform="translate(52.80 134.60) scale(0.600 1)" font-size="9" font-weight="normal" fill="#0000c4" textLength="30.17" lengthAdjust="spacing" stroke="#0000c4" stroke-width="0.10">20000</text><text transform="translate(52.80 142.70) scale(0.600 1)" font-size="9" font-weight="normal" fill="#0000c4" textLength="30.17" lengthAdjust="spacing" stroke="#0000c4" stroke-width="0.10">25000</text><text transform="translate(67.28 154.80) scale(0.600 1)" font-size="9" font-weight="normal" fill="#0000c4" stroke="#0000c4" stroke-width="0.10">0</text><text transform="translate(56.42 164.30) scale(0.600 1)" font-size="9" font-weight="normal" fill="#0000c4" textLength="24.13" lengthAdjust="spacing" stroke="#0000c4" stroke-width="0.10">5000</text><text transform="translate(52.80 179.70) scale(0.600 1)" font-size="9" font-weight="normal" fill="#0000c4" textLength="30.17" lengthAdjust="spacing" stroke="#0000c4" stroke-width="0.10">10000</text><text transform="translate(52.80 194.10) scale(0.600 1)" font-size="9" font-weight="normal" fill="#0000c4" textLength="30.17" lengthAdjust="spacing" stroke="#0000c4" stroke-width="0.10">15000</text><text transform="translate(52.80 208.90) scale(0.600 1)" font-size="9" font-weight="normal" fill="#0000c4" textLength="30.17" lengthAdjust="spacing" stroke="#0000c4" stroke-width="0.10">20000</text><text transform="translate(52.80 216.70) scale(0.600 1)" font-size="9" font-weight="normal" fill="#0000c4" textLength="30.17" lengthAdjust="spacing" stroke="#0000c4" stroke-width="0.10">25000</text><text transform="translate(43.00 135.60) rotate(-90) scale(0.720 1)" font-size="9" font-weight="bold" fill="#0000b8" textLength="74.44" lengthAdjust="spacing" stroke="#0000b8" stroke-width="0.20">Frequency (Hz)</text><text transform="translate(43.00 210.00) rotate(-90) scale(0.720 1)" font-size="9" font-weight="bold" fill="#1818d0" textLength="74.44" lengthAdjust="spacing" stroke="#1818d0" stroke-width="0.15">Frequency (Hz)</text><text transform="translate(62.00 313.60) rotate(-90) scale(0.720 1)" font-size="9" font-weight="bold" fill="#0000b8" textLength="51.11" lengthAdjust="spacing" stroke="#0000b8" stroke-width="0.20">Depth (m)</text><text transform="translate(605.60 142.40) rotate(-90) scale(0.740 1)" font-size="6.0" font-weight="bold" fill="#2828d8" textLength="90.27" lengthAdjust="spacing">In-Phase &amp; Quadrature (%)</text><text transform="translate(605.60 217.00) rotate(-90) scale(0.740 1)" font-size="6.0" font-weight="bold" fill="#2828d8" textLength="90.27" lengthAdjust="spacing">In-Phase &amp; Quadrature (%)</text><text transform="translate(604.60 324.20) rotate(-90) scale(0.740 1)" font-size="6.2" font-weight="bold" fill="#2828d8" textLength="78.38" lengthAdjust="spacing">Resistivity (ohm-m)</text><text transform="translate(67.40 229.70) scale(0.600 1)" font-size="9" font-weight="normal" fill="#0000c4" stroke="#0000c4" stroke-width="0.10">0</text><text transform="translate(67.40 273.40) scale(0.600 1)" font-size="9" font-weight="normal" fill="#0000c4" stroke="#0000c4" stroke-width="0.10">1</text><text transform="translate(67.40 323.00) scale(0.600 1)" font-size="9" font-weight="normal" fill="#0000c4" stroke="#0000c4" stroke-width="0.10">2</text><text transform="translate(67.40 369.70) scale(0.600 1)" font-size="9" font-weight="normal" fill="#0000c4" stroke="#0000c4" stroke-width="0.10">3</text><text transform="translate(76.80 390.40) scale(0.600 1)" font-size="9" font-weight="normal" fill="#0000c4" stroke="#0000c4" stroke-width="0.15">0</text><text transform="translate(312.90 390.40) scale(0.600 1)" font-size="9" font-weight="normal" fill="#0000c4" stroke="#0000c4" stroke-width="0.15">5</text><text transform="translate(545.80 390.40) scale(0.600 1)" font-size="9" font-weight="normal" fill="#0000c4" textLength="12.33" lengthAdjust="spacing" stroke="#0000c4" stroke-width="0.15">10</text><text transform="translate(280 406.7) scale(0.720 1)" font-size="8.8" font-weight="bold" fill="#0000b8" stroke="#0000b8" stroke-width="0.2"><tspan x="0" textLength="29.4" lengthAdjust="spacing">Profile</tspan> <tspan x="37.6" textLength="41.9" lengthAdjust="spacing">Distance</tspan> <tspan x="84.3" textLength="16.9" lengthAdjust="spacing">(m)</tspan></text><text transform="translate(572.60 76.20) scale(0.600 1)" font-size="9" font-weight="normal" fill="#0000c4" textLength="32.50" lengthAdjust="spacing" stroke="#0000c4" stroke-width="0.10">80000</text><text transform="translate(572.60 88.70) scale(0.600 1)" font-size="9" font-weight="normal" fill="#0000c4" textLength="32.50" lengthAdjust="spacing" stroke="#0000c4" stroke-width="0.10">60000</text><text transform="translate(572.60 108.00) scale(0.600 1)" font-size="9" font-weight="normal" fill="#0000c4" textLength="32.50" lengthAdjust="spacing" stroke="#0000c4" stroke-width="0.10">40000</text><text transform="translate(572.60 126.20) scale(0.600 1)" font-size="9" font-weight="normal" fill="#0000c4" textLength="32.50" lengthAdjust="spacing" stroke="#0000c4" stroke-width="0.10">20000</text><text transform="translate(572.60 138.80) scale(0.600 1)" font-size="9" font-weight="normal" fill="#0000c4" stroke="#0000c4" stroke-width="0.10">0</text><text transform="translate(572.60 150.80) scale(0.600 1)" font-size="9" font-weight="normal" fill="#0000c4" textLength="32.50" lengthAdjust="spacing" stroke="#0000c4" stroke-width="0.10">80000</text><text transform="translate(572.60 163.30) scale(0.600 1)" font-size="9" font-weight="normal" fill="#0000c4" textLength="32.50" lengthAdjust="spacing" stroke="#0000c4" stroke-width="0.10">60000</text><text transform="translate(572.60 182.60) scale(0.600 1)" font-size="9" font-weight="normal" fill="#0000c4" textLength="32.50" lengthAdjust="spacing" stroke="#0000c4" stroke-width="0.10">40000</text><text transform="translate(572.60 200.80) scale(0.600 1)" font-size="9" font-weight="normal" fill="#0000c4" textLength="32.50" lengthAdjust="spacing" stroke="#0000c4" stroke-width="0.10">20000</text><text transform="translate(572.60 213.40) scale(0.600 1)" font-size="9" font-weight="normal" fill="#0000c4" stroke="#0000c4" stroke-width="0.10">0</text><text transform="translate(580.60 225.20) scale(0.620 1)" font-size="7.6" font-weight="normal" fill="#0000c4" textLength="9.35" lengthAdjust="spacing" stroke="#0000c4" stroke-width="0.15">10</text><text transform="translate(581.00 294.20) scale(0.620 1)" font-size="7.6" font-weight="normal" fill="#0000c4" stroke="#0000c4" stroke-width="0.15">1</text><text transform="translate(580.00 363.80) scale(0.620 1)" font-size="7.6" font-weight="normal" fill="#0000c4" textLength="12.26" lengthAdjust="spacing" stroke="#0000c4" stroke-width="0.15">0.1</text><text x="12.3" y="7.9" font-size="6.6" font-weight="bold" fill="#fff" textLength="19.3" lengthAdjust="spacingAndGlyphs">Profile:</text><text x="34.0" y="7.9" font-size="6.6" font-weight="bold" fill="#fff" textLength="26.1" lengthAdjust="spacingAndGlyphs">[GEM-2-1</text><text x="86.6" y="7.9" font-size="6.6" font-weight="bold" fill="#fff" textLength="1.8" lengthAdjust="spacingAndGlyphs">]</text><text x="4.7" y="17.6" font-size="6.7" font-weight="normal" fill="#000" textLength="8.0" lengthAdjust="spacingAndGlyphs" stroke="#000" stroke-width="0.12">File</text><line x1="4.7" y1="18.4" x2="8.1" y2="18.4" stroke="#404040" stroke-width="0.6"/><text x="18.7" y="17.6" font-size="6.7" font-weight="normal" fill="#000" textLength="9.8" lengthAdjust="spacingAndGlyphs" stroke="#000" stroke-width="0.12">Edit</text><line x1="18.7" y1="18.4" x2="22.1" y2="18.4" stroke="#404040" stroke-width="0.6"/><text x="34.0" y="17.6" font-size="6.7" font-weight="normal" fill="#000" textLength="11.9" lengthAdjust="spacingAndGlyphs" stroke="#000" stroke-width="0.12">View</text><line x1="34.0" y1="18.4" x2="37.4" y2="18.4" stroke="#404040" stroke-width="0.6"/><text x="51.4" y="17.6" font-size="6.7" font-weight="normal" fill="#000" textLength="22.6" lengthAdjust="spacingAndGlyphs" stroke="#000" stroke-width="0.12">Calculate</text><line x1="51.4" y1="18.4" x2="54.8" y2="18.4" stroke="#404040" stroke-width="0.6"/><text x="79.9" y="17.6" font-size="6.7" font-weight="normal" fill="#000" textLength="10.6" lengthAdjust="spacingAndGlyphs" stroke="#000" stroke-width="0.12">Help</text><line x1="79.9" y1="18.4" x2="83.3" y2="18.4" stroke="#404040" stroke-width="0.6"/><text x="3.4" y="440.2" font-size="6.9" font-weight="normal" fill="#101010" textLength="12.8" lengthAdjust="spacingAndGlyphs">0.2 m</text><text x="166.8" y="440.2" font-size="6.9" font-weight="normal" fill="#101010" textLength="27.8" lengthAdjust="spacingAndGlyphs">22366.7 Hz</text><rect x="607" y="7" width="3" height="1.1" fill="#000"/><rect x="614.6" y="4" width="3.6" height="3.4" fill="none" stroke="#222" stroke-width="0.9"/><path d="M623.8 3.9 L627.6 7.6 M627.6 3.9 L623.8 7.6" stroke="#000" stroke-width="1.1" fill="none"/><rect x="2.6" y="2" width="7" height="7" fill="#101070"/><rect x="3.2" y="5.5" width="2" height="2" fill="#c02020"/><rect x="6.6" y="3" width="2" height="2" fill="#3030d0"/><path d="M625 442.5 L631 436.5 M627.5 442.5 L631 439 M629.6 442.5 L631 441.2" stroke="#8a8a8a" stroke-width="0.8"/><rect x="5.2" y="23.8" width="6.8" height="7.6" fill="#4656d6"/><path d="M8.2 24.4 L11.4 24.4 L11.4 26 L9 28.6 L6.4 28.8 Z" fill="#eef0ff"/><rect x="4.8" y="23.6" width="2" height="2" fill="#e4e860"/><rect x="19.6" y="24.2" width="6.6" height="7.2" fill="#34340c"/><rect x="21" y="24.9" width="3.8" height="2.6" fill="#b4b49a"/><rect x="20.8" y="28.4" width="4.2" height="2.6" fill="#080808"/><rect x="30.8" y="26.8" width="8" height="4" rx="1.4" fill="#3c3c3c"/><path d="M32.4 27 L33.6 24.2 L37.4 24.2 L38 27 Z" fill="#dcdcdc" stroke="#2a2a2a" stroke-width="0.8"/><rect x="32.4" y="29" width="4.8" height="1" fill="#cfcfcf"/><rect x="48.2" y="27" width="5.6" height="3.8" fill="none" stroke="#5a5a5a" stroke-width="0.9" stroke-dasharray="1.7 0.9"/><ellipse cx="61.2" cy="27.8" rx="2.9" ry="3.6" fill="#ecec7c"/><rect x="60.3" y="26.4" width="1.9" height="2.8" rx="0.6" fill="#5c5ce4"/><rect x="77.2" y="24.8" width="3.8" height="3.2" fill="#303030"/><rect x="73.8" y="27" width="4.6" height="4.4" fill="#c8c8c8" stroke="#2c2c2c" stroke-width="0.9"/><rect x="79.4" y="28" width="1.3" height="3.6" fill="#2c2c2c"/><rect x="88.4" y="23.8" width="8.4" height="7.6" fill="#f2f224"/><rect x="92.6" y="24.3" width="4" height="6.4" fill="#20208c"/><path d="M92.4 25.6 L95.8 27.5 L92.4 29.4 Z" fill="#f2f224"/><rect x="100" y="23.8" width="8.4" height="7.6" fill="#f2f224"/><rect x="100.2" y="24.3" width="4" height="6.4" fill="#20208c"/><path d="M104.4 25.6 L101 27.5 L104.4 29.4 Z" fill="#f2f224"/><rect x="111.2" y="23.8" width="8.8" height="7.4" fill="#f2f224"/><rect x="111.2" y="24.2" width="2.4" height="6.6" fill="#20208c"/><path d="M113.6 24 L118.6 24 L116.1 27.2 Z M113.6 31 L118.6 31 L116.1 27.8 Z" fill="#20208c"/><circle cx="126" cy="28.6" r="2.7" fill="#a83cc0"/><rect x="127.4" y="24.4" width="2.8" height="2.8" fill="#5858d8"/><rect x="123.8" y="24" width="2.8" height="2.4" fill="#c444a8"/><rect x="128" y="28" width="2.2" height="3" fill="#7038c0"/><rect x="125.2" y="27.6" width="1.4" height="1.6" fill="#e0b0e8"/><rect x="144" y="24" width="3" height="3" fill="#d8dcb0"/><path d="M141 24.2 L142.4 27.4 L145.4 31.2 M142.4 27.4 L140 30.6" fill="none" stroke="#e83050" stroke-width="1"/><circle cx="158.2" cy="25.6" r="2" fill="#e8e848" stroke="#6a6a14" stroke-width="1"/><rect x="157.4" y="27.4" width="1.7" height="2.6" fill="#5a5a10"/><rect x="157.3" y="30.4" width="1.9" height="1.4" fill="#8a8a20"/></svg>
</body></html>
